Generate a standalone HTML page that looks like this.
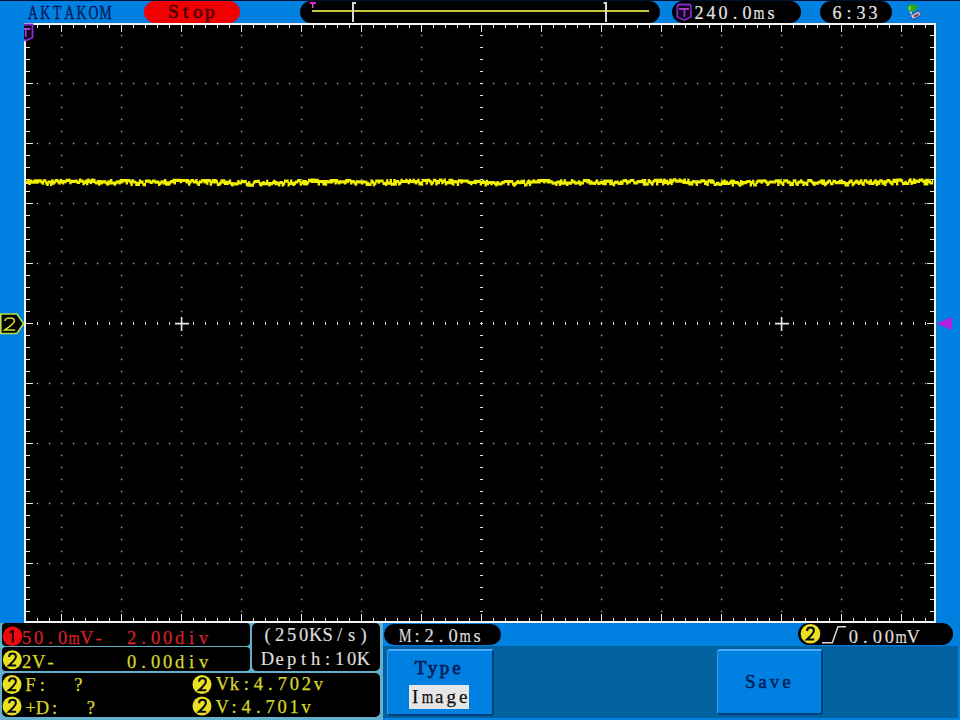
<!DOCTYPE html>
<html><head><meta charset="utf-8">
<style>
html,body{margin:0;padding:0;}
body{width:960px;height:720px;overflow:hidden;background:#0080e0;position:relative;font-family:"Liberation Mono",monospace;}
.a{position:absolute;white-space:pre;}
.pill{position:absolute;background:#000;border-radius:11.5px;}
.mono{font-family:"Liberation Mono",monospace;}
.t{font-size:19.7px;line-height:22px;}
.cn{font-family:"Liberation Sans",sans-serif;font-weight:bold;font-size:16px;line-height:20px;color:#101010;width:17px;text-align:center;}
.btn{position:absolute;background:#0080e0;border-top:2px solid #50a8ff;border-left:1px solid #3898f0;border-right:2px solid #00407a;border-bottom:2px solid #00407a;box-sizing:border-box;border-radius:3px;}
#wrap{position:absolute;left:0;top:0;width:960px;height:720px;overflow:hidden;background:#0080e0;}
</style></head><body><div id="wrap">
<svg class="a" style="left:0;top:0" width="960" height="720" viewBox="0 0 960 720">
<rect x="0" y="0" width="960" height="1" fill="#001030"/>
<rect x="24" y="23" width="912" height="600" fill="#000"/>
<path d="M60.8 34.8h1.5v1.5h-1.5zM60.8 46.8h1.5v1.5h-1.5zM60.8 58.8h1.5v1.5h-1.5zM60.8 70.8h1.5v1.5h-1.5zM60.8 82.8h1.5v1.5h-1.5zM60.8 94.8h1.5v1.5h-1.5zM60.8 106.8h1.5v1.5h-1.5zM60.8 118.8h1.5v1.5h-1.5zM60.8 130.8h1.5v1.5h-1.5zM60.8 142.8h1.5v1.5h-1.5zM60.8 154.8h1.5v1.5h-1.5zM60.8 166.8h1.5v1.5h-1.5zM60.8 178.8h1.5v1.5h-1.5zM60.8 190.8h1.5v1.5h-1.5zM60.8 202.8h1.5v1.5h-1.5zM60.8 214.8h1.5v1.5h-1.5zM60.8 226.8h1.5v1.5h-1.5zM60.8 238.8h1.5v1.5h-1.5zM60.8 250.8h1.5v1.5h-1.5zM60.8 262.8h1.5v1.5h-1.5zM60.8 274.8h1.5v1.5h-1.5zM60.8 286.8h1.5v1.5h-1.5zM60.8 298.8h1.5v1.5h-1.5zM60.8 310.8h1.5v1.5h-1.5zM60.8 322.8h1.5v1.5h-1.5zM60.8 334.8h1.5v1.5h-1.5zM60.8 346.8h1.5v1.5h-1.5zM60.8 358.8h1.5v1.5h-1.5zM60.8 370.8h1.5v1.5h-1.5zM60.8 382.8h1.5v1.5h-1.5zM60.8 394.8h1.5v1.5h-1.5zM60.8 406.8h1.5v1.5h-1.5zM60.8 418.8h1.5v1.5h-1.5zM60.8 430.8h1.5v1.5h-1.5zM60.8 442.8h1.5v1.5h-1.5zM60.8 454.8h1.5v1.5h-1.5zM60.8 466.8h1.5v1.5h-1.5zM60.8 478.8h1.5v1.5h-1.5zM60.8 490.8h1.5v1.5h-1.5zM60.8 502.8h1.5v1.5h-1.5zM60.8 514.8h1.5v1.5h-1.5zM60.8 526.8h1.5v1.5h-1.5zM60.8 538.8h1.5v1.5h-1.5zM60.8 550.8h1.5v1.5h-1.5zM60.8 562.8h1.5v1.5h-1.5zM60.8 574.8h1.5v1.5h-1.5zM60.8 586.8h1.5v1.5h-1.5zM60.8 598.8h1.5v1.5h-1.5zM60.8 610.8h1.5v1.5h-1.5zM120.8 34.8h1.5v1.5h-1.5zM120.8 46.8h1.5v1.5h-1.5zM120.8 58.8h1.5v1.5h-1.5zM120.8 70.8h1.5v1.5h-1.5zM120.8 82.8h1.5v1.5h-1.5zM120.8 94.8h1.5v1.5h-1.5zM120.8 106.8h1.5v1.5h-1.5zM120.8 118.8h1.5v1.5h-1.5zM120.8 130.8h1.5v1.5h-1.5zM120.8 142.8h1.5v1.5h-1.5zM120.8 154.8h1.5v1.5h-1.5zM120.8 166.8h1.5v1.5h-1.5zM120.8 178.8h1.5v1.5h-1.5zM120.8 190.8h1.5v1.5h-1.5zM120.8 202.8h1.5v1.5h-1.5zM120.8 214.8h1.5v1.5h-1.5zM120.8 226.8h1.5v1.5h-1.5zM120.8 238.8h1.5v1.5h-1.5zM120.8 250.8h1.5v1.5h-1.5zM120.8 262.8h1.5v1.5h-1.5zM120.8 274.8h1.5v1.5h-1.5zM120.8 286.8h1.5v1.5h-1.5zM120.8 298.8h1.5v1.5h-1.5zM120.8 310.8h1.5v1.5h-1.5zM120.8 322.8h1.5v1.5h-1.5zM120.8 334.8h1.5v1.5h-1.5zM120.8 346.8h1.5v1.5h-1.5zM120.8 358.8h1.5v1.5h-1.5zM120.8 370.8h1.5v1.5h-1.5zM120.8 382.8h1.5v1.5h-1.5zM120.8 394.8h1.5v1.5h-1.5zM120.8 406.8h1.5v1.5h-1.5zM120.8 418.8h1.5v1.5h-1.5zM120.8 430.8h1.5v1.5h-1.5zM120.8 442.8h1.5v1.5h-1.5zM120.8 454.8h1.5v1.5h-1.5zM120.8 466.8h1.5v1.5h-1.5zM120.8 478.8h1.5v1.5h-1.5zM120.8 490.8h1.5v1.5h-1.5zM120.8 502.8h1.5v1.5h-1.5zM120.8 514.8h1.5v1.5h-1.5zM120.8 526.8h1.5v1.5h-1.5zM120.8 538.8h1.5v1.5h-1.5zM120.8 550.8h1.5v1.5h-1.5zM120.8 562.8h1.5v1.5h-1.5zM120.8 574.8h1.5v1.5h-1.5zM120.8 586.8h1.5v1.5h-1.5zM120.8 598.8h1.5v1.5h-1.5zM120.8 610.8h1.5v1.5h-1.5zM180.8 34.8h1.5v1.5h-1.5zM180.8 46.8h1.5v1.5h-1.5zM180.8 58.8h1.5v1.5h-1.5zM180.8 70.8h1.5v1.5h-1.5zM180.8 82.8h1.5v1.5h-1.5zM180.8 94.8h1.5v1.5h-1.5zM180.8 106.8h1.5v1.5h-1.5zM180.8 118.8h1.5v1.5h-1.5zM180.8 130.8h1.5v1.5h-1.5zM180.8 142.8h1.5v1.5h-1.5zM180.8 154.8h1.5v1.5h-1.5zM180.8 166.8h1.5v1.5h-1.5zM180.8 178.8h1.5v1.5h-1.5zM180.8 190.8h1.5v1.5h-1.5zM180.8 202.8h1.5v1.5h-1.5zM180.8 214.8h1.5v1.5h-1.5zM180.8 226.8h1.5v1.5h-1.5zM180.8 238.8h1.5v1.5h-1.5zM180.8 250.8h1.5v1.5h-1.5zM180.8 262.8h1.5v1.5h-1.5zM180.8 274.8h1.5v1.5h-1.5zM180.8 286.8h1.5v1.5h-1.5zM180.8 298.8h1.5v1.5h-1.5zM180.8 310.8h1.5v1.5h-1.5zM180.8 322.8h1.5v1.5h-1.5zM180.8 334.8h1.5v1.5h-1.5zM180.8 346.8h1.5v1.5h-1.5zM180.8 358.8h1.5v1.5h-1.5zM180.8 370.8h1.5v1.5h-1.5zM180.8 382.8h1.5v1.5h-1.5zM180.8 394.8h1.5v1.5h-1.5zM180.8 406.8h1.5v1.5h-1.5zM180.8 418.8h1.5v1.5h-1.5zM180.8 430.8h1.5v1.5h-1.5zM180.8 442.8h1.5v1.5h-1.5zM180.8 454.8h1.5v1.5h-1.5zM180.8 466.8h1.5v1.5h-1.5zM180.8 478.8h1.5v1.5h-1.5zM180.8 490.8h1.5v1.5h-1.5zM180.8 502.8h1.5v1.5h-1.5zM180.8 514.8h1.5v1.5h-1.5zM180.8 526.8h1.5v1.5h-1.5zM180.8 538.8h1.5v1.5h-1.5zM180.8 550.8h1.5v1.5h-1.5zM180.8 562.8h1.5v1.5h-1.5zM180.8 574.8h1.5v1.5h-1.5zM180.8 586.8h1.5v1.5h-1.5zM180.8 598.8h1.5v1.5h-1.5zM180.8 610.8h1.5v1.5h-1.5zM240.8 34.8h1.5v1.5h-1.5zM240.8 46.8h1.5v1.5h-1.5zM240.8 58.8h1.5v1.5h-1.5zM240.8 70.8h1.5v1.5h-1.5zM240.8 82.8h1.5v1.5h-1.5zM240.8 94.8h1.5v1.5h-1.5zM240.8 106.8h1.5v1.5h-1.5zM240.8 118.8h1.5v1.5h-1.5zM240.8 130.8h1.5v1.5h-1.5zM240.8 142.8h1.5v1.5h-1.5zM240.8 154.8h1.5v1.5h-1.5zM240.8 166.8h1.5v1.5h-1.5zM240.8 178.8h1.5v1.5h-1.5zM240.8 190.8h1.5v1.5h-1.5zM240.8 202.8h1.5v1.5h-1.5zM240.8 214.8h1.5v1.5h-1.5zM240.8 226.8h1.5v1.5h-1.5zM240.8 238.8h1.5v1.5h-1.5zM240.8 250.8h1.5v1.5h-1.5zM240.8 262.8h1.5v1.5h-1.5zM240.8 274.8h1.5v1.5h-1.5zM240.8 286.8h1.5v1.5h-1.5zM240.8 298.8h1.5v1.5h-1.5zM240.8 310.8h1.5v1.5h-1.5zM240.8 322.8h1.5v1.5h-1.5zM240.8 334.8h1.5v1.5h-1.5zM240.8 346.8h1.5v1.5h-1.5zM240.8 358.8h1.5v1.5h-1.5zM240.8 370.8h1.5v1.5h-1.5zM240.8 382.8h1.5v1.5h-1.5zM240.8 394.8h1.5v1.5h-1.5zM240.8 406.8h1.5v1.5h-1.5zM240.8 418.8h1.5v1.5h-1.5zM240.8 430.8h1.5v1.5h-1.5zM240.8 442.8h1.5v1.5h-1.5zM240.8 454.8h1.5v1.5h-1.5zM240.8 466.8h1.5v1.5h-1.5zM240.8 478.8h1.5v1.5h-1.5zM240.8 490.8h1.5v1.5h-1.5zM240.8 502.8h1.5v1.5h-1.5zM240.8 514.8h1.5v1.5h-1.5zM240.8 526.8h1.5v1.5h-1.5zM240.8 538.8h1.5v1.5h-1.5zM240.8 550.8h1.5v1.5h-1.5zM240.8 562.8h1.5v1.5h-1.5zM240.8 574.8h1.5v1.5h-1.5zM240.8 586.8h1.5v1.5h-1.5zM240.8 598.8h1.5v1.5h-1.5zM240.8 610.8h1.5v1.5h-1.5zM300.8 34.8h1.5v1.5h-1.5zM300.8 46.8h1.5v1.5h-1.5zM300.8 58.8h1.5v1.5h-1.5zM300.8 70.8h1.5v1.5h-1.5zM300.8 82.8h1.5v1.5h-1.5zM300.8 94.8h1.5v1.5h-1.5zM300.8 106.8h1.5v1.5h-1.5zM300.8 118.8h1.5v1.5h-1.5zM300.8 130.8h1.5v1.5h-1.5zM300.8 142.8h1.5v1.5h-1.5zM300.8 154.8h1.5v1.5h-1.5zM300.8 166.8h1.5v1.5h-1.5zM300.8 178.8h1.5v1.5h-1.5zM300.8 190.8h1.5v1.5h-1.5zM300.8 202.8h1.5v1.5h-1.5zM300.8 214.8h1.5v1.5h-1.5zM300.8 226.8h1.5v1.5h-1.5zM300.8 238.8h1.5v1.5h-1.5zM300.8 250.8h1.5v1.5h-1.5zM300.8 262.8h1.5v1.5h-1.5zM300.8 274.8h1.5v1.5h-1.5zM300.8 286.8h1.5v1.5h-1.5zM300.8 298.8h1.5v1.5h-1.5zM300.8 310.8h1.5v1.5h-1.5zM300.8 322.8h1.5v1.5h-1.5zM300.8 334.8h1.5v1.5h-1.5zM300.8 346.8h1.5v1.5h-1.5zM300.8 358.8h1.5v1.5h-1.5zM300.8 370.8h1.5v1.5h-1.5zM300.8 382.8h1.5v1.5h-1.5zM300.8 394.8h1.5v1.5h-1.5zM300.8 406.8h1.5v1.5h-1.5zM300.8 418.8h1.5v1.5h-1.5zM300.8 430.8h1.5v1.5h-1.5zM300.8 442.8h1.5v1.5h-1.5zM300.8 454.8h1.5v1.5h-1.5zM300.8 466.8h1.5v1.5h-1.5zM300.8 478.8h1.5v1.5h-1.5zM300.8 490.8h1.5v1.5h-1.5zM300.8 502.8h1.5v1.5h-1.5zM300.8 514.8h1.5v1.5h-1.5zM300.8 526.8h1.5v1.5h-1.5zM300.8 538.8h1.5v1.5h-1.5zM300.8 550.8h1.5v1.5h-1.5zM300.8 562.8h1.5v1.5h-1.5zM300.8 574.8h1.5v1.5h-1.5zM300.8 586.8h1.5v1.5h-1.5zM300.8 598.8h1.5v1.5h-1.5zM300.8 610.8h1.5v1.5h-1.5zM360.8 34.8h1.5v1.5h-1.5zM360.8 46.8h1.5v1.5h-1.5zM360.8 58.8h1.5v1.5h-1.5zM360.8 70.8h1.5v1.5h-1.5zM360.8 82.8h1.5v1.5h-1.5zM360.8 94.8h1.5v1.5h-1.5zM360.8 106.8h1.5v1.5h-1.5zM360.8 118.8h1.5v1.5h-1.5zM360.8 130.8h1.5v1.5h-1.5zM360.8 142.8h1.5v1.5h-1.5zM360.8 154.8h1.5v1.5h-1.5zM360.8 166.8h1.5v1.5h-1.5zM360.8 178.8h1.5v1.5h-1.5zM360.8 190.8h1.5v1.5h-1.5zM360.8 202.8h1.5v1.5h-1.5zM360.8 214.8h1.5v1.5h-1.5zM360.8 226.8h1.5v1.5h-1.5zM360.8 238.8h1.5v1.5h-1.5zM360.8 250.8h1.5v1.5h-1.5zM360.8 262.8h1.5v1.5h-1.5zM360.8 274.8h1.5v1.5h-1.5zM360.8 286.8h1.5v1.5h-1.5zM360.8 298.8h1.5v1.5h-1.5zM360.8 310.8h1.5v1.5h-1.5zM360.8 322.8h1.5v1.5h-1.5zM360.8 334.8h1.5v1.5h-1.5zM360.8 346.8h1.5v1.5h-1.5zM360.8 358.8h1.5v1.5h-1.5zM360.8 370.8h1.5v1.5h-1.5zM360.8 382.8h1.5v1.5h-1.5zM360.8 394.8h1.5v1.5h-1.5zM360.8 406.8h1.5v1.5h-1.5zM360.8 418.8h1.5v1.5h-1.5zM360.8 430.8h1.5v1.5h-1.5zM360.8 442.8h1.5v1.5h-1.5zM360.8 454.8h1.5v1.5h-1.5zM360.8 466.8h1.5v1.5h-1.5zM360.8 478.8h1.5v1.5h-1.5zM360.8 490.8h1.5v1.5h-1.5zM360.8 502.8h1.5v1.5h-1.5zM360.8 514.8h1.5v1.5h-1.5zM360.8 526.8h1.5v1.5h-1.5zM360.8 538.8h1.5v1.5h-1.5zM360.8 550.8h1.5v1.5h-1.5zM360.8 562.8h1.5v1.5h-1.5zM360.8 574.8h1.5v1.5h-1.5zM360.8 586.8h1.5v1.5h-1.5zM360.8 598.8h1.5v1.5h-1.5zM360.8 610.8h1.5v1.5h-1.5zM420.8 34.8h1.5v1.5h-1.5zM420.8 46.8h1.5v1.5h-1.5zM420.8 58.8h1.5v1.5h-1.5zM420.8 70.8h1.5v1.5h-1.5zM420.8 82.8h1.5v1.5h-1.5zM420.8 94.8h1.5v1.5h-1.5zM420.8 106.8h1.5v1.5h-1.5zM420.8 118.8h1.5v1.5h-1.5zM420.8 130.8h1.5v1.5h-1.5zM420.8 142.8h1.5v1.5h-1.5zM420.8 154.8h1.5v1.5h-1.5zM420.8 166.8h1.5v1.5h-1.5zM420.8 178.8h1.5v1.5h-1.5zM420.8 190.8h1.5v1.5h-1.5zM420.8 202.8h1.5v1.5h-1.5zM420.8 214.8h1.5v1.5h-1.5zM420.8 226.8h1.5v1.5h-1.5zM420.8 238.8h1.5v1.5h-1.5zM420.8 250.8h1.5v1.5h-1.5zM420.8 262.8h1.5v1.5h-1.5zM420.8 274.8h1.5v1.5h-1.5zM420.8 286.8h1.5v1.5h-1.5zM420.8 298.8h1.5v1.5h-1.5zM420.8 310.8h1.5v1.5h-1.5zM420.8 322.8h1.5v1.5h-1.5zM420.8 334.8h1.5v1.5h-1.5zM420.8 346.8h1.5v1.5h-1.5zM420.8 358.8h1.5v1.5h-1.5zM420.8 370.8h1.5v1.5h-1.5zM420.8 382.8h1.5v1.5h-1.5zM420.8 394.8h1.5v1.5h-1.5zM420.8 406.8h1.5v1.5h-1.5zM420.8 418.8h1.5v1.5h-1.5zM420.8 430.8h1.5v1.5h-1.5zM420.8 442.8h1.5v1.5h-1.5zM420.8 454.8h1.5v1.5h-1.5zM420.8 466.8h1.5v1.5h-1.5zM420.8 478.8h1.5v1.5h-1.5zM420.8 490.8h1.5v1.5h-1.5zM420.8 502.8h1.5v1.5h-1.5zM420.8 514.8h1.5v1.5h-1.5zM420.8 526.8h1.5v1.5h-1.5zM420.8 538.8h1.5v1.5h-1.5zM420.8 550.8h1.5v1.5h-1.5zM420.8 562.8h1.5v1.5h-1.5zM420.8 574.8h1.5v1.5h-1.5zM420.8 586.8h1.5v1.5h-1.5zM420.8 598.8h1.5v1.5h-1.5zM420.8 610.8h1.5v1.5h-1.5zM540.8 34.8h1.5v1.5h-1.5zM540.8 46.8h1.5v1.5h-1.5zM540.8 58.8h1.5v1.5h-1.5zM540.8 70.8h1.5v1.5h-1.5zM540.8 82.8h1.5v1.5h-1.5zM540.8 94.8h1.5v1.5h-1.5zM540.8 106.8h1.5v1.5h-1.5zM540.8 118.8h1.5v1.5h-1.5zM540.8 130.8h1.5v1.5h-1.5zM540.8 142.8h1.5v1.5h-1.5zM540.8 154.8h1.5v1.5h-1.5zM540.8 166.8h1.5v1.5h-1.5zM540.8 178.8h1.5v1.5h-1.5zM540.8 190.8h1.5v1.5h-1.5zM540.8 202.8h1.5v1.5h-1.5zM540.8 214.8h1.5v1.5h-1.5zM540.8 226.8h1.5v1.5h-1.5zM540.8 238.8h1.5v1.5h-1.5zM540.8 250.8h1.5v1.5h-1.5zM540.8 262.8h1.5v1.5h-1.5zM540.8 274.8h1.5v1.5h-1.5zM540.8 286.8h1.5v1.5h-1.5zM540.8 298.8h1.5v1.5h-1.5zM540.8 310.8h1.5v1.5h-1.5zM540.8 322.8h1.5v1.5h-1.5zM540.8 334.8h1.5v1.5h-1.5zM540.8 346.8h1.5v1.5h-1.5zM540.8 358.8h1.5v1.5h-1.5zM540.8 370.8h1.5v1.5h-1.5zM540.8 382.8h1.5v1.5h-1.5zM540.8 394.8h1.5v1.5h-1.5zM540.8 406.8h1.5v1.5h-1.5zM540.8 418.8h1.5v1.5h-1.5zM540.8 430.8h1.5v1.5h-1.5zM540.8 442.8h1.5v1.5h-1.5zM540.8 454.8h1.5v1.5h-1.5zM540.8 466.8h1.5v1.5h-1.5zM540.8 478.8h1.5v1.5h-1.5zM540.8 490.8h1.5v1.5h-1.5zM540.8 502.8h1.5v1.5h-1.5zM540.8 514.8h1.5v1.5h-1.5zM540.8 526.8h1.5v1.5h-1.5zM540.8 538.8h1.5v1.5h-1.5zM540.8 550.8h1.5v1.5h-1.5zM540.8 562.8h1.5v1.5h-1.5zM540.8 574.8h1.5v1.5h-1.5zM540.8 586.8h1.5v1.5h-1.5zM540.8 598.8h1.5v1.5h-1.5zM540.8 610.8h1.5v1.5h-1.5zM600.8 34.8h1.5v1.5h-1.5zM600.8 46.8h1.5v1.5h-1.5zM600.8 58.8h1.5v1.5h-1.5zM600.8 70.8h1.5v1.5h-1.5zM600.8 82.8h1.5v1.5h-1.5zM600.8 94.8h1.5v1.5h-1.5zM600.8 106.8h1.5v1.5h-1.5zM600.8 118.8h1.5v1.5h-1.5zM600.8 130.8h1.5v1.5h-1.5zM600.8 142.8h1.5v1.5h-1.5zM600.8 154.8h1.5v1.5h-1.5zM600.8 166.8h1.5v1.5h-1.5zM600.8 178.8h1.5v1.5h-1.5zM600.8 190.8h1.5v1.5h-1.5zM600.8 202.8h1.5v1.5h-1.5zM600.8 214.8h1.5v1.5h-1.5zM600.8 226.8h1.5v1.5h-1.5zM600.8 238.8h1.5v1.5h-1.5zM600.8 250.8h1.5v1.5h-1.5zM600.8 262.8h1.5v1.5h-1.5zM600.8 274.8h1.5v1.5h-1.5zM600.8 286.8h1.5v1.5h-1.5zM600.8 298.8h1.5v1.5h-1.5zM600.8 310.8h1.5v1.5h-1.5zM600.8 322.8h1.5v1.5h-1.5zM600.8 334.8h1.5v1.5h-1.5zM600.8 346.8h1.5v1.5h-1.5zM600.8 358.8h1.5v1.5h-1.5zM600.8 370.8h1.5v1.5h-1.5zM600.8 382.8h1.5v1.5h-1.5zM600.8 394.8h1.5v1.5h-1.5zM600.8 406.8h1.5v1.5h-1.5zM600.8 418.8h1.5v1.5h-1.5zM600.8 430.8h1.5v1.5h-1.5zM600.8 442.8h1.5v1.5h-1.5zM600.8 454.8h1.5v1.5h-1.5zM600.8 466.8h1.5v1.5h-1.5zM600.8 478.8h1.5v1.5h-1.5zM600.8 490.8h1.5v1.5h-1.5zM600.8 502.8h1.5v1.5h-1.5zM600.8 514.8h1.5v1.5h-1.5zM600.8 526.8h1.5v1.5h-1.5zM600.8 538.8h1.5v1.5h-1.5zM600.8 550.8h1.5v1.5h-1.5zM600.8 562.8h1.5v1.5h-1.5zM600.8 574.8h1.5v1.5h-1.5zM600.8 586.8h1.5v1.5h-1.5zM600.8 598.8h1.5v1.5h-1.5zM600.8 610.8h1.5v1.5h-1.5zM660.8 34.8h1.5v1.5h-1.5zM660.8 46.8h1.5v1.5h-1.5zM660.8 58.8h1.5v1.5h-1.5zM660.8 70.8h1.5v1.5h-1.5zM660.8 82.8h1.5v1.5h-1.5zM660.8 94.8h1.5v1.5h-1.5zM660.8 106.8h1.5v1.5h-1.5zM660.8 118.8h1.5v1.5h-1.5zM660.8 130.8h1.5v1.5h-1.5zM660.8 142.8h1.5v1.5h-1.5zM660.8 154.8h1.5v1.5h-1.5zM660.8 166.8h1.5v1.5h-1.5zM660.8 178.8h1.5v1.5h-1.5zM660.8 190.8h1.5v1.5h-1.5zM660.8 202.8h1.5v1.5h-1.5zM660.8 214.8h1.5v1.5h-1.5zM660.8 226.8h1.5v1.5h-1.5zM660.8 238.8h1.5v1.5h-1.5zM660.8 250.8h1.5v1.5h-1.5zM660.8 262.8h1.5v1.5h-1.5zM660.8 274.8h1.5v1.5h-1.5zM660.8 286.8h1.5v1.5h-1.5zM660.8 298.8h1.5v1.5h-1.5zM660.8 310.8h1.5v1.5h-1.5zM660.8 322.8h1.5v1.5h-1.5zM660.8 334.8h1.5v1.5h-1.5zM660.8 346.8h1.5v1.5h-1.5zM660.8 358.8h1.5v1.5h-1.5zM660.8 370.8h1.5v1.5h-1.5zM660.8 382.8h1.5v1.5h-1.5zM660.8 394.8h1.5v1.5h-1.5zM660.8 406.8h1.5v1.5h-1.5zM660.8 418.8h1.5v1.5h-1.5zM660.8 430.8h1.5v1.5h-1.5zM660.8 442.8h1.5v1.5h-1.5zM660.8 454.8h1.5v1.5h-1.5zM660.8 466.8h1.5v1.5h-1.5zM660.8 478.8h1.5v1.5h-1.5zM660.8 490.8h1.5v1.5h-1.5zM660.8 502.8h1.5v1.5h-1.5zM660.8 514.8h1.5v1.5h-1.5zM660.8 526.8h1.5v1.5h-1.5zM660.8 538.8h1.5v1.5h-1.5zM660.8 550.8h1.5v1.5h-1.5zM660.8 562.8h1.5v1.5h-1.5zM660.8 574.8h1.5v1.5h-1.5zM660.8 586.8h1.5v1.5h-1.5zM660.8 598.8h1.5v1.5h-1.5zM660.8 610.8h1.5v1.5h-1.5zM720.8 34.8h1.5v1.5h-1.5zM720.8 46.8h1.5v1.5h-1.5zM720.8 58.8h1.5v1.5h-1.5zM720.8 70.8h1.5v1.5h-1.5zM720.8 82.8h1.5v1.5h-1.5zM720.8 94.8h1.5v1.5h-1.5zM720.8 106.8h1.5v1.5h-1.5zM720.8 118.8h1.5v1.5h-1.5zM720.8 130.8h1.5v1.5h-1.5zM720.8 142.8h1.5v1.5h-1.5zM720.8 154.8h1.5v1.5h-1.5zM720.8 166.8h1.5v1.5h-1.5zM720.8 178.8h1.5v1.5h-1.5zM720.8 190.8h1.5v1.5h-1.5zM720.8 202.8h1.5v1.5h-1.5zM720.8 214.8h1.5v1.5h-1.5zM720.8 226.8h1.5v1.5h-1.5zM720.8 238.8h1.5v1.5h-1.5zM720.8 250.8h1.5v1.5h-1.5zM720.8 262.8h1.5v1.5h-1.5zM720.8 274.8h1.5v1.5h-1.5zM720.8 286.8h1.5v1.5h-1.5zM720.8 298.8h1.5v1.5h-1.5zM720.8 310.8h1.5v1.5h-1.5zM720.8 322.8h1.5v1.5h-1.5zM720.8 334.8h1.5v1.5h-1.5zM720.8 346.8h1.5v1.5h-1.5zM720.8 358.8h1.5v1.5h-1.5zM720.8 370.8h1.5v1.5h-1.5zM720.8 382.8h1.5v1.5h-1.5zM720.8 394.8h1.5v1.5h-1.5zM720.8 406.8h1.5v1.5h-1.5zM720.8 418.8h1.5v1.5h-1.5zM720.8 430.8h1.5v1.5h-1.5zM720.8 442.8h1.5v1.5h-1.5zM720.8 454.8h1.5v1.5h-1.5zM720.8 466.8h1.5v1.5h-1.5zM720.8 478.8h1.5v1.5h-1.5zM720.8 490.8h1.5v1.5h-1.5zM720.8 502.8h1.5v1.5h-1.5zM720.8 514.8h1.5v1.5h-1.5zM720.8 526.8h1.5v1.5h-1.5zM720.8 538.8h1.5v1.5h-1.5zM720.8 550.8h1.5v1.5h-1.5zM720.8 562.8h1.5v1.5h-1.5zM720.8 574.8h1.5v1.5h-1.5zM720.8 586.8h1.5v1.5h-1.5zM720.8 598.8h1.5v1.5h-1.5zM720.8 610.8h1.5v1.5h-1.5zM780.8 34.8h1.5v1.5h-1.5zM780.8 46.8h1.5v1.5h-1.5zM780.8 58.8h1.5v1.5h-1.5zM780.8 70.8h1.5v1.5h-1.5zM780.8 82.8h1.5v1.5h-1.5zM780.8 94.8h1.5v1.5h-1.5zM780.8 106.8h1.5v1.5h-1.5zM780.8 118.8h1.5v1.5h-1.5zM780.8 130.8h1.5v1.5h-1.5zM780.8 142.8h1.5v1.5h-1.5zM780.8 154.8h1.5v1.5h-1.5zM780.8 166.8h1.5v1.5h-1.5zM780.8 178.8h1.5v1.5h-1.5zM780.8 190.8h1.5v1.5h-1.5zM780.8 202.8h1.5v1.5h-1.5zM780.8 214.8h1.5v1.5h-1.5zM780.8 226.8h1.5v1.5h-1.5zM780.8 238.8h1.5v1.5h-1.5zM780.8 250.8h1.5v1.5h-1.5zM780.8 262.8h1.5v1.5h-1.5zM780.8 274.8h1.5v1.5h-1.5zM780.8 286.8h1.5v1.5h-1.5zM780.8 298.8h1.5v1.5h-1.5zM780.8 310.8h1.5v1.5h-1.5zM780.8 322.8h1.5v1.5h-1.5zM780.8 334.8h1.5v1.5h-1.5zM780.8 346.8h1.5v1.5h-1.5zM780.8 358.8h1.5v1.5h-1.5zM780.8 370.8h1.5v1.5h-1.5zM780.8 382.8h1.5v1.5h-1.5zM780.8 394.8h1.5v1.5h-1.5zM780.8 406.8h1.5v1.5h-1.5zM780.8 418.8h1.5v1.5h-1.5zM780.8 430.8h1.5v1.5h-1.5zM780.8 442.8h1.5v1.5h-1.5zM780.8 454.8h1.5v1.5h-1.5zM780.8 466.8h1.5v1.5h-1.5zM780.8 478.8h1.5v1.5h-1.5zM780.8 490.8h1.5v1.5h-1.5zM780.8 502.8h1.5v1.5h-1.5zM780.8 514.8h1.5v1.5h-1.5zM780.8 526.8h1.5v1.5h-1.5zM780.8 538.8h1.5v1.5h-1.5zM780.8 550.8h1.5v1.5h-1.5zM780.8 562.8h1.5v1.5h-1.5zM780.8 574.8h1.5v1.5h-1.5zM780.8 586.8h1.5v1.5h-1.5zM780.8 598.8h1.5v1.5h-1.5zM780.8 610.8h1.5v1.5h-1.5zM840.8 34.8h1.5v1.5h-1.5zM840.8 46.8h1.5v1.5h-1.5zM840.8 58.8h1.5v1.5h-1.5zM840.8 70.8h1.5v1.5h-1.5zM840.8 82.8h1.5v1.5h-1.5zM840.8 94.8h1.5v1.5h-1.5zM840.8 106.8h1.5v1.5h-1.5zM840.8 118.8h1.5v1.5h-1.5zM840.8 130.8h1.5v1.5h-1.5zM840.8 142.8h1.5v1.5h-1.5zM840.8 154.8h1.5v1.5h-1.5zM840.8 166.8h1.5v1.5h-1.5zM840.8 178.8h1.5v1.5h-1.5zM840.8 190.8h1.5v1.5h-1.5zM840.8 202.8h1.5v1.5h-1.5zM840.8 214.8h1.5v1.5h-1.5zM840.8 226.8h1.5v1.5h-1.5zM840.8 238.8h1.5v1.5h-1.5zM840.8 250.8h1.5v1.5h-1.5zM840.8 262.8h1.5v1.5h-1.5zM840.8 274.8h1.5v1.5h-1.5zM840.8 286.8h1.5v1.5h-1.5zM840.8 298.8h1.5v1.5h-1.5zM840.8 310.8h1.5v1.5h-1.5zM840.8 322.8h1.5v1.5h-1.5zM840.8 334.8h1.5v1.5h-1.5zM840.8 346.8h1.5v1.5h-1.5zM840.8 358.8h1.5v1.5h-1.5zM840.8 370.8h1.5v1.5h-1.5zM840.8 382.8h1.5v1.5h-1.5zM840.8 394.8h1.5v1.5h-1.5zM840.8 406.8h1.5v1.5h-1.5zM840.8 418.8h1.5v1.5h-1.5zM840.8 430.8h1.5v1.5h-1.5zM840.8 442.8h1.5v1.5h-1.5zM840.8 454.8h1.5v1.5h-1.5zM840.8 466.8h1.5v1.5h-1.5zM840.8 478.8h1.5v1.5h-1.5zM840.8 490.8h1.5v1.5h-1.5zM840.8 502.8h1.5v1.5h-1.5zM840.8 514.8h1.5v1.5h-1.5zM840.8 526.8h1.5v1.5h-1.5zM840.8 538.8h1.5v1.5h-1.5zM840.8 550.8h1.5v1.5h-1.5zM840.8 562.8h1.5v1.5h-1.5zM840.8 574.8h1.5v1.5h-1.5zM840.8 586.8h1.5v1.5h-1.5zM840.8 598.8h1.5v1.5h-1.5zM840.8 610.8h1.5v1.5h-1.5zM900.8 34.8h1.5v1.5h-1.5zM900.8 46.8h1.5v1.5h-1.5zM900.8 58.8h1.5v1.5h-1.5zM900.8 70.8h1.5v1.5h-1.5zM900.8 82.8h1.5v1.5h-1.5zM900.8 94.8h1.5v1.5h-1.5zM900.8 106.8h1.5v1.5h-1.5zM900.8 118.8h1.5v1.5h-1.5zM900.8 130.8h1.5v1.5h-1.5zM900.8 142.8h1.5v1.5h-1.5zM900.8 154.8h1.5v1.5h-1.5zM900.8 166.8h1.5v1.5h-1.5zM900.8 178.8h1.5v1.5h-1.5zM900.8 190.8h1.5v1.5h-1.5zM900.8 202.8h1.5v1.5h-1.5zM900.8 214.8h1.5v1.5h-1.5zM900.8 226.8h1.5v1.5h-1.5zM900.8 238.8h1.5v1.5h-1.5zM900.8 250.8h1.5v1.5h-1.5zM900.8 262.8h1.5v1.5h-1.5zM900.8 274.8h1.5v1.5h-1.5zM900.8 286.8h1.5v1.5h-1.5zM900.8 298.8h1.5v1.5h-1.5zM900.8 310.8h1.5v1.5h-1.5zM900.8 322.8h1.5v1.5h-1.5zM900.8 334.8h1.5v1.5h-1.5zM900.8 346.8h1.5v1.5h-1.5zM900.8 358.8h1.5v1.5h-1.5zM900.8 370.8h1.5v1.5h-1.5zM900.8 382.8h1.5v1.5h-1.5zM900.8 394.8h1.5v1.5h-1.5zM900.8 406.8h1.5v1.5h-1.5zM900.8 418.8h1.5v1.5h-1.5zM900.8 430.8h1.5v1.5h-1.5zM900.8 442.8h1.5v1.5h-1.5zM900.8 454.8h1.5v1.5h-1.5zM900.8 466.8h1.5v1.5h-1.5zM900.8 478.8h1.5v1.5h-1.5zM900.8 490.8h1.5v1.5h-1.5zM900.8 502.8h1.5v1.5h-1.5zM900.8 514.8h1.5v1.5h-1.5zM900.8 526.8h1.5v1.5h-1.5zM900.8 538.8h1.5v1.5h-1.5zM900.8 550.8h1.5v1.5h-1.5zM900.8 562.8h1.5v1.5h-1.5zM900.8 574.8h1.5v1.5h-1.5zM900.8 586.8h1.5v1.5h-1.5zM900.8 598.8h1.5v1.5h-1.5zM900.8 610.8h1.5v1.5h-1.5zM36.8 82.8h1.5v1.5h-1.5zM48.8 82.8h1.5v1.5h-1.5zM60.8 82.8h1.5v1.5h-1.5zM72.8 82.8h1.5v1.5h-1.5zM84.8 82.8h1.5v1.5h-1.5zM96.8 82.8h1.5v1.5h-1.5zM108.8 82.8h1.5v1.5h-1.5zM120.8 82.8h1.5v1.5h-1.5zM132.8 82.8h1.5v1.5h-1.5zM144.8 82.8h1.5v1.5h-1.5zM156.8 82.8h1.5v1.5h-1.5zM168.8 82.8h1.5v1.5h-1.5zM180.8 82.8h1.5v1.5h-1.5zM192.8 82.8h1.5v1.5h-1.5zM204.8 82.8h1.5v1.5h-1.5zM216.8 82.8h1.5v1.5h-1.5zM228.8 82.8h1.5v1.5h-1.5zM240.8 82.8h1.5v1.5h-1.5zM252.8 82.8h1.5v1.5h-1.5zM264.8 82.8h1.5v1.5h-1.5zM276.8 82.8h1.5v1.5h-1.5zM288.8 82.8h1.5v1.5h-1.5zM300.8 82.8h1.5v1.5h-1.5zM312.8 82.8h1.5v1.5h-1.5zM324.8 82.8h1.5v1.5h-1.5zM336.8 82.8h1.5v1.5h-1.5zM348.8 82.8h1.5v1.5h-1.5zM360.8 82.8h1.5v1.5h-1.5zM372.8 82.8h1.5v1.5h-1.5zM384.8 82.8h1.5v1.5h-1.5zM396.8 82.8h1.5v1.5h-1.5zM408.8 82.8h1.5v1.5h-1.5zM420.8 82.8h1.5v1.5h-1.5zM432.8 82.8h1.5v1.5h-1.5zM444.8 82.8h1.5v1.5h-1.5zM456.8 82.8h1.5v1.5h-1.5zM468.8 82.8h1.5v1.5h-1.5zM480.8 82.8h1.5v1.5h-1.5zM492.8 82.8h1.5v1.5h-1.5zM504.8 82.8h1.5v1.5h-1.5zM516.8 82.8h1.5v1.5h-1.5zM528.8 82.8h1.5v1.5h-1.5zM540.8 82.8h1.5v1.5h-1.5zM552.8 82.8h1.5v1.5h-1.5zM564.8 82.8h1.5v1.5h-1.5zM576.8 82.8h1.5v1.5h-1.5zM588.8 82.8h1.5v1.5h-1.5zM600.8 82.8h1.5v1.5h-1.5zM612.8 82.8h1.5v1.5h-1.5zM624.8 82.8h1.5v1.5h-1.5zM636.8 82.8h1.5v1.5h-1.5zM648.8 82.8h1.5v1.5h-1.5zM660.8 82.8h1.5v1.5h-1.5zM672.8 82.8h1.5v1.5h-1.5zM684.8 82.8h1.5v1.5h-1.5zM696.8 82.8h1.5v1.5h-1.5zM708.8 82.8h1.5v1.5h-1.5zM720.8 82.8h1.5v1.5h-1.5zM732.8 82.8h1.5v1.5h-1.5zM744.8 82.8h1.5v1.5h-1.5zM756.8 82.8h1.5v1.5h-1.5zM768.8 82.8h1.5v1.5h-1.5zM780.8 82.8h1.5v1.5h-1.5zM792.8 82.8h1.5v1.5h-1.5zM804.8 82.8h1.5v1.5h-1.5zM816.8 82.8h1.5v1.5h-1.5zM828.8 82.8h1.5v1.5h-1.5zM840.8 82.8h1.5v1.5h-1.5zM852.8 82.8h1.5v1.5h-1.5zM864.8 82.8h1.5v1.5h-1.5zM876.8 82.8h1.5v1.5h-1.5zM888.8 82.8h1.5v1.5h-1.5zM900.8 82.8h1.5v1.5h-1.5zM912.8 82.8h1.5v1.5h-1.5zM924.8 82.8h1.5v1.5h-1.5zM36.8 142.8h1.5v1.5h-1.5zM48.8 142.8h1.5v1.5h-1.5zM60.8 142.8h1.5v1.5h-1.5zM72.8 142.8h1.5v1.5h-1.5zM84.8 142.8h1.5v1.5h-1.5zM96.8 142.8h1.5v1.5h-1.5zM108.8 142.8h1.5v1.5h-1.5zM120.8 142.8h1.5v1.5h-1.5zM132.8 142.8h1.5v1.5h-1.5zM144.8 142.8h1.5v1.5h-1.5zM156.8 142.8h1.5v1.5h-1.5zM168.8 142.8h1.5v1.5h-1.5zM180.8 142.8h1.5v1.5h-1.5zM192.8 142.8h1.5v1.5h-1.5zM204.8 142.8h1.5v1.5h-1.5zM216.8 142.8h1.5v1.5h-1.5zM228.8 142.8h1.5v1.5h-1.5zM240.8 142.8h1.5v1.5h-1.5zM252.8 142.8h1.5v1.5h-1.5zM264.8 142.8h1.5v1.5h-1.5zM276.8 142.8h1.5v1.5h-1.5zM288.8 142.8h1.5v1.5h-1.5zM300.8 142.8h1.5v1.5h-1.5zM312.8 142.8h1.5v1.5h-1.5zM324.8 142.8h1.5v1.5h-1.5zM336.8 142.8h1.5v1.5h-1.5zM348.8 142.8h1.5v1.5h-1.5zM360.8 142.8h1.5v1.5h-1.5zM372.8 142.8h1.5v1.5h-1.5zM384.8 142.8h1.5v1.5h-1.5zM396.8 142.8h1.5v1.5h-1.5zM408.8 142.8h1.5v1.5h-1.5zM420.8 142.8h1.5v1.5h-1.5zM432.8 142.8h1.5v1.5h-1.5zM444.8 142.8h1.5v1.5h-1.5zM456.8 142.8h1.5v1.5h-1.5zM468.8 142.8h1.5v1.5h-1.5zM480.8 142.8h1.5v1.5h-1.5zM492.8 142.8h1.5v1.5h-1.5zM504.8 142.8h1.5v1.5h-1.5zM516.8 142.8h1.5v1.5h-1.5zM528.8 142.8h1.5v1.5h-1.5zM540.8 142.8h1.5v1.5h-1.5zM552.8 142.8h1.5v1.5h-1.5zM564.8 142.8h1.5v1.5h-1.5zM576.8 142.8h1.5v1.5h-1.5zM588.8 142.8h1.5v1.5h-1.5zM600.8 142.8h1.5v1.5h-1.5zM612.8 142.8h1.5v1.5h-1.5zM624.8 142.8h1.5v1.5h-1.5zM636.8 142.8h1.5v1.5h-1.5zM648.8 142.8h1.5v1.5h-1.5zM660.8 142.8h1.5v1.5h-1.5zM672.8 142.8h1.5v1.5h-1.5zM684.8 142.8h1.5v1.5h-1.5zM696.8 142.8h1.5v1.5h-1.5zM708.8 142.8h1.5v1.5h-1.5zM720.8 142.8h1.5v1.5h-1.5zM732.8 142.8h1.5v1.5h-1.5zM744.8 142.8h1.5v1.5h-1.5zM756.8 142.8h1.5v1.5h-1.5zM768.8 142.8h1.5v1.5h-1.5zM780.8 142.8h1.5v1.5h-1.5zM792.8 142.8h1.5v1.5h-1.5zM804.8 142.8h1.5v1.5h-1.5zM816.8 142.8h1.5v1.5h-1.5zM828.8 142.8h1.5v1.5h-1.5zM840.8 142.8h1.5v1.5h-1.5zM852.8 142.8h1.5v1.5h-1.5zM864.8 142.8h1.5v1.5h-1.5zM876.8 142.8h1.5v1.5h-1.5zM888.8 142.8h1.5v1.5h-1.5zM900.8 142.8h1.5v1.5h-1.5zM912.8 142.8h1.5v1.5h-1.5zM924.8 142.8h1.5v1.5h-1.5zM36.8 202.8h1.5v1.5h-1.5zM48.8 202.8h1.5v1.5h-1.5zM60.8 202.8h1.5v1.5h-1.5zM72.8 202.8h1.5v1.5h-1.5zM84.8 202.8h1.5v1.5h-1.5zM96.8 202.8h1.5v1.5h-1.5zM108.8 202.8h1.5v1.5h-1.5zM120.8 202.8h1.5v1.5h-1.5zM132.8 202.8h1.5v1.5h-1.5zM144.8 202.8h1.5v1.5h-1.5zM156.8 202.8h1.5v1.5h-1.5zM168.8 202.8h1.5v1.5h-1.5zM180.8 202.8h1.5v1.5h-1.5zM192.8 202.8h1.5v1.5h-1.5zM204.8 202.8h1.5v1.5h-1.5zM216.8 202.8h1.5v1.5h-1.5zM228.8 202.8h1.5v1.5h-1.5zM240.8 202.8h1.5v1.5h-1.5zM252.8 202.8h1.5v1.5h-1.5zM264.8 202.8h1.5v1.5h-1.5zM276.8 202.8h1.5v1.5h-1.5zM288.8 202.8h1.5v1.5h-1.5zM300.8 202.8h1.5v1.5h-1.5zM312.8 202.8h1.5v1.5h-1.5zM324.8 202.8h1.5v1.5h-1.5zM336.8 202.8h1.5v1.5h-1.5zM348.8 202.8h1.5v1.5h-1.5zM360.8 202.8h1.5v1.5h-1.5zM372.8 202.8h1.5v1.5h-1.5zM384.8 202.8h1.5v1.5h-1.5zM396.8 202.8h1.5v1.5h-1.5zM408.8 202.8h1.5v1.5h-1.5zM420.8 202.8h1.5v1.5h-1.5zM432.8 202.8h1.5v1.5h-1.5zM444.8 202.8h1.5v1.5h-1.5zM456.8 202.8h1.5v1.5h-1.5zM468.8 202.8h1.5v1.5h-1.5zM480.8 202.8h1.5v1.5h-1.5zM492.8 202.8h1.5v1.5h-1.5zM504.8 202.8h1.5v1.5h-1.5zM516.8 202.8h1.5v1.5h-1.5zM528.8 202.8h1.5v1.5h-1.5zM540.8 202.8h1.5v1.5h-1.5zM552.8 202.8h1.5v1.5h-1.5zM564.8 202.8h1.5v1.5h-1.5zM576.8 202.8h1.5v1.5h-1.5zM588.8 202.8h1.5v1.5h-1.5zM600.8 202.8h1.5v1.5h-1.5zM612.8 202.8h1.5v1.5h-1.5zM624.8 202.8h1.5v1.5h-1.5zM636.8 202.8h1.5v1.5h-1.5zM648.8 202.8h1.5v1.5h-1.5zM660.8 202.8h1.5v1.5h-1.5zM672.8 202.8h1.5v1.5h-1.5zM684.8 202.8h1.5v1.5h-1.5zM696.8 202.8h1.5v1.5h-1.5zM708.8 202.8h1.5v1.5h-1.5zM720.8 202.8h1.5v1.5h-1.5zM732.8 202.8h1.5v1.5h-1.5zM744.8 202.8h1.5v1.5h-1.5zM756.8 202.8h1.5v1.5h-1.5zM768.8 202.8h1.5v1.5h-1.5zM780.8 202.8h1.5v1.5h-1.5zM792.8 202.8h1.5v1.5h-1.5zM804.8 202.8h1.5v1.5h-1.5zM816.8 202.8h1.5v1.5h-1.5zM828.8 202.8h1.5v1.5h-1.5zM840.8 202.8h1.5v1.5h-1.5zM852.8 202.8h1.5v1.5h-1.5zM864.8 202.8h1.5v1.5h-1.5zM876.8 202.8h1.5v1.5h-1.5zM888.8 202.8h1.5v1.5h-1.5zM900.8 202.8h1.5v1.5h-1.5zM912.8 202.8h1.5v1.5h-1.5zM924.8 202.8h1.5v1.5h-1.5zM36.8 262.8h1.5v1.5h-1.5zM48.8 262.8h1.5v1.5h-1.5zM60.8 262.8h1.5v1.5h-1.5zM72.8 262.8h1.5v1.5h-1.5zM84.8 262.8h1.5v1.5h-1.5zM96.8 262.8h1.5v1.5h-1.5zM108.8 262.8h1.5v1.5h-1.5zM120.8 262.8h1.5v1.5h-1.5zM132.8 262.8h1.5v1.5h-1.5zM144.8 262.8h1.5v1.5h-1.5zM156.8 262.8h1.5v1.5h-1.5zM168.8 262.8h1.5v1.5h-1.5zM180.8 262.8h1.5v1.5h-1.5zM192.8 262.8h1.5v1.5h-1.5zM204.8 262.8h1.5v1.5h-1.5zM216.8 262.8h1.5v1.5h-1.5zM228.8 262.8h1.5v1.5h-1.5zM240.8 262.8h1.5v1.5h-1.5zM252.8 262.8h1.5v1.5h-1.5zM264.8 262.8h1.5v1.5h-1.5zM276.8 262.8h1.5v1.5h-1.5zM288.8 262.8h1.5v1.5h-1.5zM300.8 262.8h1.5v1.5h-1.5zM312.8 262.8h1.5v1.5h-1.5zM324.8 262.8h1.5v1.5h-1.5zM336.8 262.8h1.5v1.5h-1.5zM348.8 262.8h1.5v1.5h-1.5zM360.8 262.8h1.5v1.5h-1.5zM372.8 262.8h1.5v1.5h-1.5zM384.8 262.8h1.5v1.5h-1.5zM396.8 262.8h1.5v1.5h-1.5zM408.8 262.8h1.5v1.5h-1.5zM420.8 262.8h1.5v1.5h-1.5zM432.8 262.8h1.5v1.5h-1.5zM444.8 262.8h1.5v1.5h-1.5zM456.8 262.8h1.5v1.5h-1.5zM468.8 262.8h1.5v1.5h-1.5zM480.8 262.8h1.5v1.5h-1.5zM492.8 262.8h1.5v1.5h-1.5zM504.8 262.8h1.5v1.5h-1.5zM516.8 262.8h1.5v1.5h-1.5zM528.8 262.8h1.5v1.5h-1.5zM540.8 262.8h1.5v1.5h-1.5zM552.8 262.8h1.5v1.5h-1.5zM564.8 262.8h1.5v1.5h-1.5zM576.8 262.8h1.5v1.5h-1.5zM588.8 262.8h1.5v1.5h-1.5zM600.8 262.8h1.5v1.5h-1.5zM612.8 262.8h1.5v1.5h-1.5zM624.8 262.8h1.5v1.5h-1.5zM636.8 262.8h1.5v1.5h-1.5zM648.8 262.8h1.5v1.5h-1.5zM660.8 262.8h1.5v1.5h-1.5zM672.8 262.8h1.5v1.5h-1.5zM684.8 262.8h1.5v1.5h-1.5zM696.8 262.8h1.5v1.5h-1.5zM708.8 262.8h1.5v1.5h-1.5zM720.8 262.8h1.5v1.5h-1.5zM732.8 262.8h1.5v1.5h-1.5zM744.8 262.8h1.5v1.5h-1.5zM756.8 262.8h1.5v1.5h-1.5zM768.8 262.8h1.5v1.5h-1.5zM780.8 262.8h1.5v1.5h-1.5zM792.8 262.8h1.5v1.5h-1.5zM804.8 262.8h1.5v1.5h-1.5zM816.8 262.8h1.5v1.5h-1.5zM828.8 262.8h1.5v1.5h-1.5zM840.8 262.8h1.5v1.5h-1.5zM852.8 262.8h1.5v1.5h-1.5zM864.8 262.8h1.5v1.5h-1.5zM876.8 262.8h1.5v1.5h-1.5zM888.8 262.8h1.5v1.5h-1.5zM900.8 262.8h1.5v1.5h-1.5zM912.8 262.8h1.5v1.5h-1.5zM924.8 262.8h1.5v1.5h-1.5zM36.8 382.8h1.5v1.5h-1.5zM48.8 382.8h1.5v1.5h-1.5zM60.8 382.8h1.5v1.5h-1.5zM72.8 382.8h1.5v1.5h-1.5zM84.8 382.8h1.5v1.5h-1.5zM96.8 382.8h1.5v1.5h-1.5zM108.8 382.8h1.5v1.5h-1.5zM120.8 382.8h1.5v1.5h-1.5zM132.8 382.8h1.5v1.5h-1.5zM144.8 382.8h1.5v1.5h-1.5zM156.8 382.8h1.5v1.5h-1.5zM168.8 382.8h1.5v1.5h-1.5zM180.8 382.8h1.5v1.5h-1.5zM192.8 382.8h1.5v1.5h-1.5zM204.8 382.8h1.5v1.5h-1.5zM216.8 382.8h1.5v1.5h-1.5zM228.8 382.8h1.5v1.5h-1.5zM240.8 382.8h1.5v1.5h-1.5zM252.8 382.8h1.5v1.5h-1.5zM264.8 382.8h1.5v1.5h-1.5zM276.8 382.8h1.5v1.5h-1.5zM288.8 382.8h1.5v1.5h-1.5zM300.8 382.8h1.5v1.5h-1.5zM312.8 382.8h1.5v1.5h-1.5zM324.8 382.8h1.5v1.5h-1.5zM336.8 382.8h1.5v1.5h-1.5zM348.8 382.8h1.5v1.5h-1.5zM360.8 382.8h1.5v1.5h-1.5zM372.8 382.8h1.5v1.5h-1.5zM384.8 382.8h1.5v1.5h-1.5zM396.8 382.8h1.5v1.5h-1.5zM408.8 382.8h1.5v1.5h-1.5zM420.8 382.8h1.5v1.5h-1.5zM432.8 382.8h1.5v1.5h-1.5zM444.8 382.8h1.5v1.5h-1.5zM456.8 382.8h1.5v1.5h-1.5zM468.8 382.8h1.5v1.5h-1.5zM480.8 382.8h1.5v1.5h-1.5zM492.8 382.8h1.5v1.5h-1.5zM504.8 382.8h1.5v1.5h-1.5zM516.8 382.8h1.5v1.5h-1.5zM528.8 382.8h1.5v1.5h-1.5zM540.8 382.8h1.5v1.5h-1.5zM552.8 382.8h1.5v1.5h-1.5zM564.8 382.8h1.5v1.5h-1.5zM576.8 382.8h1.5v1.5h-1.5zM588.8 382.8h1.5v1.5h-1.5zM600.8 382.8h1.5v1.5h-1.5zM612.8 382.8h1.5v1.5h-1.5zM624.8 382.8h1.5v1.5h-1.5zM636.8 382.8h1.5v1.5h-1.5zM648.8 382.8h1.5v1.5h-1.5zM660.8 382.8h1.5v1.5h-1.5zM672.8 382.8h1.5v1.5h-1.5zM684.8 382.8h1.5v1.5h-1.5zM696.8 382.8h1.5v1.5h-1.5zM708.8 382.8h1.5v1.5h-1.5zM720.8 382.8h1.5v1.5h-1.5zM732.8 382.8h1.5v1.5h-1.5zM744.8 382.8h1.5v1.5h-1.5zM756.8 382.8h1.5v1.5h-1.5zM768.8 382.8h1.5v1.5h-1.5zM780.8 382.8h1.5v1.5h-1.5zM792.8 382.8h1.5v1.5h-1.5zM804.8 382.8h1.5v1.5h-1.5zM816.8 382.8h1.5v1.5h-1.5zM828.8 382.8h1.5v1.5h-1.5zM840.8 382.8h1.5v1.5h-1.5zM852.8 382.8h1.5v1.5h-1.5zM864.8 382.8h1.5v1.5h-1.5zM876.8 382.8h1.5v1.5h-1.5zM888.8 382.8h1.5v1.5h-1.5zM900.8 382.8h1.5v1.5h-1.5zM912.8 382.8h1.5v1.5h-1.5zM924.8 382.8h1.5v1.5h-1.5zM36.8 442.8h1.5v1.5h-1.5zM48.8 442.8h1.5v1.5h-1.5zM60.8 442.8h1.5v1.5h-1.5zM72.8 442.8h1.5v1.5h-1.5zM84.8 442.8h1.5v1.5h-1.5zM96.8 442.8h1.5v1.5h-1.5zM108.8 442.8h1.5v1.5h-1.5zM120.8 442.8h1.5v1.5h-1.5zM132.8 442.8h1.5v1.5h-1.5zM144.8 442.8h1.5v1.5h-1.5zM156.8 442.8h1.5v1.5h-1.5zM168.8 442.8h1.5v1.5h-1.5zM180.8 442.8h1.5v1.5h-1.5zM192.8 442.8h1.5v1.5h-1.5zM204.8 442.8h1.5v1.5h-1.5zM216.8 442.8h1.5v1.5h-1.5zM228.8 442.8h1.5v1.5h-1.5zM240.8 442.8h1.5v1.5h-1.5zM252.8 442.8h1.5v1.5h-1.5zM264.8 442.8h1.5v1.5h-1.5zM276.8 442.8h1.5v1.5h-1.5zM288.8 442.8h1.5v1.5h-1.5zM300.8 442.8h1.5v1.5h-1.5zM312.8 442.8h1.5v1.5h-1.5zM324.8 442.8h1.5v1.5h-1.5zM336.8 442.8h1.5v1.5h-1.5zM348.8 442.8h1.5v1.5h-1.5zM360.8 442.8h1.5v1.5h-1.5zM372.8 442.8h1.5v1.5h-1.5zM384.8 442.8h1.5v1.5h-1.5zM396.8 442.8h1.5v1.5h-1.5zM408.8 442.8h1.5v1.5h-1.5zM420.8 442.8h1.5v1.5h-1.5zM432.8 442.8h1.5v1.5h-1.5zM444.8 442.8h1.5v1.5h-1.5zM456.8 442.8h1.5v1.5h-1.5zM468.8 442.8h1.5v1.5h-1.5zM480.8 442.8h1.5v1.5h-1.5zM492.8 442.8h1.5v1.5h-1.5zM504.8 442.8h1.5v1.5h-1.5zM516.8 442.8h1.5v1.5h-1.5zM528.8 442.8h1.5v1.5h-1.5zM540.8 442.8h1.5v1.5h-1.5zM552.8 442.8h1.5v1.5h-1.5zM564.8 442.8h1.5v1.5h-1.5zM576.8 442.8h1.5v1.5h-1.5zM588.8 442.8h1.5v1.5h-1.5zM600.8 442.8h1.5v1.5h-1.5zM612.8 442.8h1.5v1.5h-1.5zM624.8 442.8h1.5v1.5h-1.5zM636.8 442.8h1.5v1.5h-1.5zM648.8 442.8h1.5v1.5h-1.5zM660.8 442.8h1.5v1.5h-1.5zM672.8 442.8h1.5v1.5h-1.5zM684.8 442.8h1.5v1.5h-1.5zM696.8 442.8h1.5v1.5h-1.5zM708.8 442.8h1.5v1.5h-1.5zM720.8 442.8h1.5v1.5h-1.5zM732.8 442.8h1.5v1.5h-1.5zM744.8 442.8h1.5v1.5h-1.5zM756.8 442.8h1.5v1.5h-1.5zM768.8 442.8h1.5v1.5h-1.5zM780.8 442.8h1.5v1.5h-1.5zM792.8 442.8h1.5v1.5h-1.5zM804.8 442.8h1.5v1.5h-1.5zM816.8 442.8h1.5v1.5h-1.5zM828.8 442.8h1.5v1.5h-1.5zM840.8 442.8h1.5v1.5h-1.5zM852.8 442.8h1.5v1.5h-1.5zM864.8 442.8h1.5v1.5h-1.5zM876.8 442.8h1.5v1.5h-1.5zM888.8 442.8h1.5v1.5h-1.5zM900.8 442.8h1.5v1.5h-1.5zM912.8 442.8h1.5v1.5h-1.5zM924.8 442.8h1.5v1.5h-1.5zM36.8 502.8h1.5v1.5h-1.5zM48.8 502.8h1.5v1.5h-1.5zM60.8 502.8h1.5v1.5h-1.5zM72.8 502.8h1.5v1.5h-1.5zM84.8 502.8h1.5v1.5h-1.5zM96.8 502.8h1.5v1.5h-1.5zM108.8 502.8h1.5v1.5h-1.5zM120.8 502.8h1.5v1.5h-1.5zM132.8 502.8h1.5v1.5h-1.5zM144.8 502.8h1.5v1.5h-1.5zM156.8 502.8h1.5v1.5h-1.5zM168.8 502.8h1.5v1.5h-1.5zM180.8 502.8h1.5v1.5h-1.5zM192.8 502.8h1.5v1.5h-1.5zM204.8 502.8h1.5v1.5h-1.5zM216.8 502.8h1.5v1.5h-1.5zM228.8 502.8h1.5v1.5h-1.5zM240.8 502.8h1.5v1.5h-1.5zM252.8 502.8h1.5v1.5h-1.5zM264.8 502.8h1.5v1.5h-1.5zM276.8 502.8h1.5v1.5h-1.5zM288.8 502.8h1.5v1.5h-1.5zM300.8 502.8h1.5v1.5h-1.5zM312.8 502.8h1.5v1.5h-1.5zM324.8 502.8h1.5v1.5h-1.5zM336.8 502.8h1.5v1.5h-1.5zM348.8 502.8h1.5v1.5h-1.5zM360.8 502.8h1.5v1.5h-1.5zM372.8 502.8h1.5v1.5h-1.5zM384.8 502.8h1.5v1.5h-1.5zM396.8 502.8h1.5v1.5h-1.5zM408.8 502.8h1.5v1.5h-1.5zM420.8 502.8h1.5v1.5h-1.5zM432.8 502.8h1.5v1.5h-1.5zM444.8 502.8h1.5v1.5h-1.5zM456.8 502.8h1.5v1.5h-1.5zM468.8 502.8h1.5v1.5h-1.5zM480.8 502.8h1.5v1.5h-1.5zM492.8 502.8h1.5v1.5h-1.5zM504.8 502.8h1.5v1.5h-1.5zM516.8 502.8h1.5v1.5h-1.5zM528.8 502.8h1.5v1.5h-1.5zM540.8 502.8h1.5v1.5h-1.5zM552.8 502.8h1.5v1.5h-1.5zM564.8 502.8h1.5v1.5h-1.5zM576.8 502.8h1.5v1.5h-1.5zM588.8 502.8h1.5v1.5h-1.5zM600.8 502.8h1.5v1.5h-1.5zM612.8 502.8h1.5v1.5h-1.5zM624.8 502.8h1.5v1.5h-1.5zM636.8 502.8h1.5v1.5h-1.5zM648.8 502.8h1.5v1.5h-1.5zM660.8 502.8h1.5v1.5h-1.5zM672.8 502.8h1.5v1.5h-1.5zM684.8 502.8h1.5v1.5h-1.5zM696.8 502.8h1.5v1.5h-1.5zM708.8 502.8h1.5v1.5h-1.5zM720.8 502.8h1.5v1.5h-1.5zM732.8 502.8h1.5v1.5h-1.5zM744.8 502.8h1.5v1.5h-1.5zM756.8 502.8h1.5v1.5h-1.5zM768.8 502.8h1.5v1.5h-1.5zM780.8 502.8h1.5v1.5h-1.5zM792.8 502.8h1.5v1.5h-1.5zM804.8 502.8h1.5v1.5h-1.5zM816.8 502.8h1.5v1.5h-1.5zM828.8 502.8h1.5v1.5h-1.5zM840.8 502.8h1.5v1.5h-1.5zM852.8 502.8h1.5v1.5h-1.5zM864.8 502.8h1.5v1.5h-1.5zM876.8 502.8h1.5v1.5h-1.5zM888.8 502.8h1.5v1.5h-1.5zM900.8 502.8h1.5v1.5h-1.5zM912.8 502.8h1.5v1.5h-1.5zM924.8 502.8h1.5v1.5h-1.5zM36.8 562.8h1.5v1.5h-1.5zM48.8 562.8h1.5v1.5h-1.5zM60.8 562.8h1.5v1.5h-1.5zM72.8 562.8h1.5v1.5h-1.5zM84.8 562.8h1.5v1.5h-1.5zM96.8 562.8h1.5v1.5h-1.5zM108.8 562.8h1.5v1.5h-1.5zM120.8 562.8h1.5v1.5h-1.5zM132.8 562.8h1.5v1.5h-1.5zM144.8 562.8h1.5v1.5h-1.5zM156.8 562.8h1.5v1.5h-1.5zM168.8 562.8h1.5v1.5h-1.5zM180.8 562.8h1.5v1.5h-1.5zM192.8 562.8h1.5v1.5h-1.5zM204.8 562.8h1.5v1.5h-1.5zM216.8 562.8h1.5v1.5h-1.5zM228.8 562.8h1.5v1.5h-1.5zM240.8 562.8h1.5v1.5h-1.5zM252.8 562.8h1.5v1.5h-1.5zM264.8 562.8h1.5v1.5h-1.5zM276.8 562.8h1.5v1.5h-1.5zM288.8 562.8h1.5v1.5h-1.5zM300.8 562.8h1.5v1.5h-1.5zM312.8 562.8h1.5v1.5h-1.5zM324.8 562.8h1.5v1.5h-1.5zM336.8 562.8h1.5v1.5h-1.5zM348.8 562.8h1.5v1.5h-1.5zM360.8 562.8h1.5v1.5h-1.5zM372.8 562.8h1.5v1.5h-1.5zM384.8 562.8h1.5v1.5h-1.5zM396.8 562.8h1.5v1.5h-1.5zM408.8 562.8h1.5v1.5h-1.5zM420.8 562.8h1.5v1.5h-1.5zM432.8 562.8h1.5v1.5h-1.5zM444.8 562.8h1.5v1.5h-1.5zM456.8 562.8h1.5v1.5h-1.5zM468.8 562.8h1.5v1.5h-1.5zM480.8 562.8h1.5v1.5h-1.5zM492.8 562.8h1.5v1.5h-1.5zM504.8 562.8h1.5v1.5h-1.5zM516.8 562.8h1.5v1.5h-1.5zM528.8 562.8h1.5v1.5h-1.5zM540.8 562.8h1.5v1.5h-1.5zM552.8 562.8h1.5v1.5h-1.5zM564.8 562.8h1.5v1.5h-1.5zM576.8 562.8h1.5v1.5h-1.5zM588.8 562.8h1.5v1.5h-1.5zM600.8 562.8h1.5v1.5h-1.5zM612.8 562.8h1.5v1.5h-1.5zM624.8 562.8h1.5v1.5h-1.5zM636.8 562.8h1.5v1.5h-1.5zM648.8 562.8h1.5v1.5h-1.5zM660.8 562.8h1.5v1.5h-1.5zM672.8 562.8h1.5v1.5h-1.5zM684.8 562.8h1.5v1.5h-1.5zM696.8 562.8h1.5v1.5h-1.5zM708.8 562.8h1.5v1.5h-1.5zM720.8 562.8h1.5v1.5h-1.5zM732.8 562.8h1.5v1.5h-1.5zM744.8 562.8h1.5v1.5h-1.5zM756.8 562.8h1.5v1.5h-1.5zM768.8 562.8h1.5v1.5h-1.5zM780.8 562.8h1.5v1.5h-1.5zM792.8 562.8h1.5v1.5h-1.5zM804.8 562.8h1.5v1.5h-1.5zM816.8 562.8h1.5v1.5h-1.5zM828.8 562.8h1.5v1.5h-1.5zM840.8 562.8h1.5v1.5h-1.5zM852.8 562.8h1.5v1.5h-1.5zM864.8 562.8h1.5v1.5h-1.5zM876.8 562.8h1.5v1.5h-1.5zM888.8 562.8h1.5v1.5h-1.5zM900.8 562.8h1.5v1.5h-1.5zM912.8 562.8h1.5v1.5h-1.5zM924.8 562.8h1.5v1.5h-1.5z" fill="#989898"/>
<path d="M37 322h1v3h-1zM49 322h1v3h-1zM61 322h1v3h-1zM73 322h1v3h-1zM85 322h1v3h-1zM97 322h1v3h-1zM109 322h1v3h-1zM121 322h1v3h-1zM133 322h1v3h-1zM145 322h1v3h-1zM157 322h1v3h-1zM169 322h1v3h-1zM181 322h1v3h-1zM193 322h1v3h-1zM205 322h1v3h-1zM217 322h1v3h-1zM229 322h1v3h-1zM241 322h1v3h-1zM253 322h1v3h-1zM265 322h1v3h-1zM277 322h1v3h-1zM289 322h1v3h-1zM301 322h1v3h-1zM313 322h1v3h-1zM325 322h1v3h-1zM337 322h1v3h-1zM349 322h1v3h-1zM361 322h1v3h-1zM373 322h1v3h-1zM385 322h1v3h-1zM397 322h1v3h-1zM409 322h1v3h-1zM421 322h1v3h-1zM433 322h1v3h-1zM445 322h1v3h-1zM457 322h1v3h-1zM469 322h1v3h-1zM481 322h1v3h-1zM493 322h1v3h-1zM505 322h1v3h-1zM517 322h1v3h-1zM529 322h1v3h-1zM541 322h1v3h-1zM553 322h1v3h-1zM565 322h1v3h-1zM577 322h1v3h-1zM589 322h1v3h-1zM601 322h1v3h-1zM613 322h1v3h-1zM625 322h1v3h-1zM637 322h1v3h-1zM649 322h1v3h-1zM661 322h1v3h-1zM673 322h1v3h-1zM685 322h1v3h-1zM697 322h1v3h-1zM709 322h1v3h-1zM721 322h1v3h-1zM733 322h1v3h-1zM745 322h1v3h-1zM757 322h1v3h-1zM769 322h1v3h-1zM781 322h1v3h-1zM793 322h1v3h-1zM805 322h1v3h-1zM817 322h1v3h-1zM829 322h1v3h-1zM841 322h1v3h-1zM853 322h1v3h-1zM865 322h1v3h-1zM877 322h1v3h-1zM889 322h1v3h-1zM901 322h1v3h-1zM913 322h1v3h-1zM925 322h1v3h-1zM480 35h3v1h-3zM480 47h3v1h-3zM480 59h3v1h-3zM480 71h3v1h-3zM480 83h3v1h-3zM480 95h3v1h-3zM480 107h3v1h-3zM480 119h3v1h-3zM480 131h3v1h-3zM480 143h3v1h-3zM480 155h3v1h-3zM480 167h3v1h-3zM480 179h3v1h-3zM480 191h3v1h-3zM480 203h3v1h-3zM480 215h3v1h-3zM480 227h3v1h-3zM480 239h3v1h-3zM480 251h3v1h-3zM480 263h3v1h-3zM480 275h3v1h-3zM480 287h3v1h-3zM480 299h3v1h-3zM480 311h3v1h-3zM480 323h3v1h-3zM480 335h3v1h-3zM480 347h3v1h-3zM480 359h3v1h-3zM480 371h3v1h-3zM480 383h3v1h-3zM480 395h3v1h-3zM480 407h3v1h-3zM480 419h3v1h-3zM480 431h3v1h-3zM480 443h3v1h-3zM480 455h3v1h-3zM480 467h3v1h-3zM480 479h3v1h-3zM480 491h3v1h-3zM480 503h3v1h-3zM480 515h3v1h-3zM480 527h3v1h-3zM480 539h3v1h-3zM480 551h3v1h-3zM480 563h3v1h-3zM480 575h3v1h-3zM480 587h3v1h-3zM480 599h3v1h-3zM480 611h3v1h-3z" fill="#e0e0e0"/>
<path d="M175 322.8h14v1.6h-14zM180.8 317h1.6v14h-1.6zM775 322.8h14v1.6h-14zM780.8 317h1.6v14h-1.6z" fill="#e8e8e8"/>
<path d="M37 25h1v3h-1zM37 618h1v3h-1zM49 25h1v3h-1zM49 618h1v3h-1zM61 25h1v7h-1zM61 614h1v7h-1zM73 25h1v3h-1zM73 618h1v3h-1zM85 25h1v3h-1zM85 618h1v3h-1zM97 25h1v3h-1zM97 618h1v3h-1zM109 25h1v3h-1zM109 618h1v3h-1zM121 25h1v7h-1zM121 614h1v7h-1zM133 25h1v3h-1zM133 618h1v3h-1zM145 25h1v3h-1zM145 618h1v3h-1zM157 25h1v3h-1zM157 618h1v3h-1zM169 25h1v3h-1zM169 618h1v3h-1zM181 25h1v7h-1zM181 614h1v7h-1zM193 25h1v3h-1zM193 618h1v3h-1zM205 25h1v3h-1zM205 618h1v3h-1zM217 25h1v3h-1zM217 618h1v3h-1zM229 25h1v3h-1zM229 618h1v3h-1zM241 25h1v7h-1zM241 614h1v7h-1zM253 25h1v3h-1zM253 618h1v3h-1zM265 25h1v3h-1zM265 618h1v3h-1zM277 25h1v3h-1zM277 618h1v3h-1zM289 25h1v3h-1zM289 618h1v3h-1zM301 25h1v7h-1zM301 614h1v7h-1zM313 25h1v3h-1zM313 618h1v3h-1zM325 25h1v3h-1zM325 618h1v3h-1zM337 25h1v3h-1zM337 618h1v3h-1zM349 25h1v3h-1zM349 618h1v3h-1zM361 25h1v7h-1zM361 614h1v7h-1zM373 25h1v3h-1zM373 618h1v3h-1zM385 25h1v3h-1zM385 618h1v3h-1zM397 25h1v3h-1zM397 618h1v3h-1zM409 25h1v3h-1zM409 618h1v3h-1zM421 25h1v7h-1zM421 614h1v7h-1zM433 25h1v3h-1zM433 618h1v3h-1zM445 25h1v3h-1zM445 618h1v3h-1zM457 25h1v3h-1zM457 618h1v3h-1zM469 25h1v3h-1zM469 618h1v3h-1zM481 25h1v7h-1zM481 614h1v7h-1zM493 25h1v3h-1zM493 618h1v3h-1zM505 25h1v3h-1zM505 618h1v3h-1zM517 25h1v3h-1zM517 618h1v3h-1zM529 25h1v3h-1zM529 618h1v3h-1zM541 25h1v7h-1zM541 614h1v7h-1zM553 25h1v3h-1zM553 618h1v3h-1zM565 25h1v3h-1zM565 618h1v3h-1zM577 25h1v3h-1zM577 618h1v3h-1zM589 25h1v3h-1zM589 618h1v3h-1zM601 25h1v7h-1zM601 614h1v7h-1zM613 25h1v3h-1zM613 618h1v3h-1zM625 25h1v3h-1zM625 618h1v3h-1zM637 25h1v3h-1zM637 618h1v3h-1zM649 25h1v3h-1zM649 618h1v3h-1zM661 25h1v7h-1zM661 614h1v7h-1zM673 25h1v3h-1zM673 618h1v3h-1zM685 25h1v3h-1zM685 618h1v3h-1zM697 25h1v3h-1zM697 618h1v3h-1zM709 25h1v3h-1zM709 618h1v3h-1zM721 25h1v7h-1zM721 614h1v7h-1zM733 25h1v3h-1zM733 618h1v3h-1zM745 25h1v3h-1zM745 618h1v3h-1zM757 25h1v3h-1zM757 618h1v3h-1zM769 25h1v3h-1zM769 618h1v3h-1zM781 25h1v7h-1zM781 614h1v7h-1zM793 25h1v3h-1zM793 618h1v3h-1zM805 25h1v3h-1zM805 618h1v3h-1zM817 25h1v3h-1zM817 618h1v3h-1zM829 25h1v3h-1zM829 618h1v3h-1zM841 25h1v7h-1zM841 614h1v7h-1zM853 25h1v3h-1zM853 618h1v3h-1zM865 25h1v3h-1zM865 618h1v3h-1zM877 25h1v3h-1zM877 618h1v3h-1zM889 25h1v3h-1zM889 618h1v3h-1zM901 25h1v7h-1zM901 614h1v7h-1zM913 25h1v3h-1zM913 618h1v3h-1zM925 25h1v3h-1zM925 618h1v3h-1zM26 35h4v1h-4zM930 35h4v1h-4zM26 47h4v1h-4zM930 47h4v1h-4zM26 59h4v1h-4zM930 59h4v1h-4zM26 71h4v1h-4zM930 71h4v1h-4zM26 83h7v1h-7zM927 83h7v1h-7zM26 95h4v1h-4zM930 95h4v1h-4zM26 107h4v1h-4zM930 107h4v1h-4zM26 119h4v1h-4zM930 119h4v1h-4zM26 131h4v1h-4zM930 131h4v1h-4zM26 143h7v1h-7zM927 143h7v1h-7zM26 155h4v1h-4zM930 155h4v1h-4zM26 167h4v1h-4zM930 167h4v1h-4zM26 179h4v1h-4zM930 179h4v1h-4zM26 191h4v1h-4zM930 191h4v1h-4zM26 203h7v1h-7zM927 203h7v1h-7zM26 215h4v1h-4zM930 215h4v1h-4zM26 227h4v1h-4zM930 227h4v1h-4zM26 239h4v1h-4zM930 239h4v1h-4zM26 251h4v1h-4zM930 251h4v1h-4zM26 263h7v1h-7zM927 263h7v1h-7zM26 275h4v1h-4zM930 275h4v1h-4zM26 287h4v1h-4zM930 287h4v1h-4zM26 299h4v1h-4zM930 299h4v1h-4zM26 311h4v1h-4zM930 311h4v1h-4zM26 323h7v1h-7zM927 323h7v1h-7zM26 335h4v1h-4zM930 335h4v1h-4zM26 347h4v1h-4zM930 347h4v1h-4zM26 359h4v1h-4zM930 359h4v1h-4zM26 371h4v1h-4zM930 371h4v1h-4zM26 383h7v1h-7zM927 383h7v1h-7zM26 395h4v1h-4zM930 395h4v1h-4zM26 407h4v1h-4zM930 407h4v1h-4zM26 419h4v1h-4zM930 419h4v1h-4zM26 431h4v1h-4zM930 431h4v1h-4zM26 443h7v1h-7zM927 443h7v1h-7zM26 455h4v1h-4zM930 455h4v1h-4zM26 467h4v1h-4zM930 467h4v1h-4zM26 479h4v1h-4zM930 479h4v1h-4zM26 491h4v1h-4zM930 491h4v1h-4zM26 503h7v1h-7zM927 503h7v1h-7zM26 515h4v1h-4zM930 515h4v1h-4zM26 527h4v1h-4zM930 527h4v1h-4zM26 539h4v1h-4zM930 539h4v1h-4zM26 551h4v1h-4zM930 551h4v1h-4zM26 563h7v1h-7zM927 563h7v1h-7zM26 575h4v1h-4zM930 575h4v1h-4zM26 587h4v1h-4zM930 587h4v1h-4zM26 599h4v1h-4zM930 599h4v1h-4zM26 611h4v1h-4zM930 611h4v1h-4z" fill="#e8e8e8"/>
<rect x="24" y="23" width="912" height="2" fill="#f4f4f4"/>
<rect x="24" y="621" width="912" height="2" fill="#f4f4f4"/>
<rect x="24" y="23" width="2" height="600" fill="#f4f4f4"/>
<rect x="934" y="23" width="2" height="600" fill="#f4f4f4"/>
<path d="M26.0 180.8h1.2V184.0h-1.2zM27.2 179.6h1.2V184.0h-1.2zM28.4 179.5h1.2V185.1h-1.2zM29.6 179.5h1.2V185.1h-1.2zM30.8 179.4h1.2V183.8h-1.2zM32.0 180.6h1.2V183.8h-1.2zM33.2 179.4h1.2V183.8h-1.2zM34.4 179.3h1.2V183.7h-1.2zM35.6 179.3h1.2V183.7h-1.2zM36.8 179.3h1.2V183.7h-1.2zM38.0 179.2h1.2V183.6h-1.2zM39.2 179.2h1.2V182.4h-1.2zM40.4 179.2h1.2V183.6h-1.2zM41.6 180.4h1.2V184.8h-1.2zM42.8 179.2h1.2V184.8h-1.2zM44.0 179.2h1.2V182.4h-1.2zM45.2 179.2h1.2V184.8h-1.2zM46.4 181.6h1.2V186.0h-1.2zM47.6 180.4h1.2V186.0h-1.2zM48.8 180.4h1.2V183.6h-1.2zM50.0 180.4h1.2V186.0h-1.2zM51.2 179.2h1.2V186.0h-1.2zM52.4 179.2h1.2V184.8h-1.2zM53.6 180.4h1.2V184.8h-1.2zM54.8 179.1h1.2V183.5h-1.2zM56.0 179.1h1.2V182.3h-1.2zM57.2 179.1h1.2V183.5h-1.2zM58.4 180.3h1.2V184.7h-1.2zM59.6 179.0h1.2V184.6h-1.2zM60.8 179.0h1.2V183.4h-1.2zM62.0 180.1h1.2V184.5h-1.2zM63.2 180.1h1.2V184.5h-1.2zM64.4 180.0h1.2V183.2h-1.2zM65.6 178.8h1.2V183.2h-1.2zM66.8 178.7h1.2V181.9h-1.2zM68.0 178.7h1.2V181.9h-1.2zM69.2 178.6h1.2V184.2h-1.2zM70.4 179.8h1.2V184.2h-1.2zM71.6 179.7h1.2V182.9h-1.2zM72.8 179.7h1.2V182.9h-1.2zM74.0 179.7h1.2V182.9h-1.2zM75.2 179.6h1.2V182.8h-1.2zM76.4 179.6h1.2V184.0h-1.2zM77.6 180.8h1.2V184.0h-1.2zM78.8 178.4h1.2V184.0h-1.2zM80.0 178.4h1.2V182.8h-1.2zM81.2 179.6h1.2V182.8h-1.2zM82.4 179.6h1.2V185.2h-1.2zM83.6 180.8h1.2V185.2h-1.2zM84.8 179.6h1.2V184.0h-1.2zM86.0 179.6h1.2V185.2h-1.2zM87.2 178.5h1.2V185.3h-1.2zM88.4 178.5h1.2V182.9h-1.2zM89.6 179.7h1.2V184.1h-1.2zM90.8 178.6h1.2V184.2h-1.2zM92.0 178.6h1.2V183.0h-1.2zM93.2 178.7h1.2V183.1h-1.2zM94.4 178.7h1.2V184.3h-1.2zM95.6 181.2h1.2V184.4h-1.2zM96.8 180.0h1.2V184.4h-1.2zM98.0 180.1h1.2V185.7h-1.2zM99.2 180.1h1.2V185.7h-1.2zM100.4 180.1h1.2V184.5h-1.2zM101.6 180.2h1.2V184.6h-1.2zM102.8 180.2h1.2V183.4h-1.2zM104.0 180.2h1.2V183.4h-1.2zM105.2 180.2h1.2V184.6h-1.2zM106.4 181.4h1.2V185.8h-1.2zM107.6 180.2h1.2V185.8h-1.2zM108.8 180.3h1.2V184.7h-1.2zM110.0 179.1h1.2V184.7h-1.2zM111.2 179.0h1.2V184.6h-1.2zM112.4 181.4h1.2V184.6h-1.2zM113.6 181.4h1.2V185.8h-1.2zM114.8 181.4h1.2V185.8h-1.2zM116.0 180.2h1.2V184.6h-1.2zM117.2 180.2h1.2V183.4h-1.2zM118.4 180.2h1.2V184.6h-1.2zM119.6 179.0h1.2V184.6h-1.2zM120.8 179.0h1.2V183.4h-1.2zM122.0 179.0h1.2V183.4h-1.2zM123.2 179.0h1.2V182.2h-1.2zM124.4 179.0h1.2V182.2h-1.2zM125.6 179.0h1.2V184.6h-1.2zM126.8 179.0h1.2V184.6h-1.2zM128.0 179.0h1.2V182.2h-1.2zM129.2 179.1h1.2V183.5h-1.2zM130.4 180.3h1.2V185.9h-1.2zM131.6 179.1h1.2V185.9h-1.2zM132.8 179.2h1.2V183.6h-1.2zM134.0 180.4h1.2V183.6h-1.2zM135.2 180.4h1.2V186.0h-1.2zM136.4 181.7h1.2V186.1h-1.2zM137.6 181.7h1.2V186.1h-1.2zM138.8 179.3h1.2V186.1h-1.2zM140.0 179.4h1.2V183.8h-1.2zM141.2 180.6h1.2V183.8h-1.2zM142.4 180.6h1.2V186.2h-1.2zM143.6 183.1h1.2V186.3h-1.2zM144.8 179.5h1.2V186.3h-1.2zM146.0 179.5h1.2V182.7h-1.2zM147.2 179.5h1.2V182.7h-1.2zM148.4 179.5h1.2V182.7h-1.2zM149.6 179.5h1.2V183.9h-1.2zM150.8 180.7h1.2V183.9h-1.2zM152.0 179.4h1.2V183.8h-1.2zM153.2 179.4h1.2V182.6h-1.2zM154.4 179.4h1.2V183.8h-1.2zM155.6 180.5h1.2V183.7h-1.2zM156.8 180.5h1.2V183.7h-1.2zM158.0 180.5h1.2V186.1h-1.2zM159.2 181.6h1.2V186.0h-1.2zM160.4 180.4h1.2V184.8h-1.2zM161.6 180.3h1.2V183.5h-1.2zM162.8 180.3h1.2V184.7h-1.2zM164.0 179.0h1.2V184.6h-1.2zM165.2 179.0h1.2V185.8h-1.2zM166.4 181.3h1.2V185.7h-1.2zM167.6 181.3h1.2V185.7h-1.2zM168.8 181.3h1.2V185.7h-1.2zM170.0 180.0h1.2V184.4h-1.2zM171.2 180.0h1.2V183.2h-1.2zM172.4 178.8h1.2V183.2h-1.2zM173.6 178.8h1.2V184.4h-1.2zM174.8 178.8h1.2V184.4h-1.2zM176.0 178.8h1.2V182.0h-1.2zM177.2 178.8h1.2V182.0h-1.2zM178.4 178.8h1.2V182.0h-1.2zM179.6 178.8h1.2V183.2h-1.2zM180.8 178.9h1.2V183.3h-1.2zM182.0 178.9h1.2V182.1h-1.2zM183.2 178.9h1.2V182.1h-1.2zM184.4 178.9h1.2V182.1h-1.2zM185.6 179.0h1.2V183.4h-1.2zM186.8 179.0h1.2V183.4h-1.2zM188.0 179.0h1.2V185.8h-1.2zM189.2 180.2h1.2V185.8h-1.2zM190.4 179.1h1.2V183.5h-1.2zM191.6 179.1h1.2V182.3h-1.2zM192.8 179.1h1.2V183.5h-1.2zM194.0 180.3h1.2V183.5h-1.2zM195.2 179.1h1.2V183.5h-1.2zM196.4 179.1h1.2V184.7h-1.2zM197.6 181.5h1.2V185.9h-1.2zM198.8 180.3h1.2V185.9h-1.2zM200.0 180.3h1.2V183.5h-1.2zM201.2 179.1h1.2V183.5h-1.2zM202.4 179.1h1.2V182.3h-1.2zM203.6 179.1h1.2V183.5h-1.2zM204.8 179.1h1.2V183.5h-1.2zM206.0 179.1h1.2V184.7h-1.2zM207.2 179.1h1.2V184.7h-1.2zM208.4 179.0h1.2V182.2h-1.2zM209.6 179.0h1.2V185.8h-1.2zM210.8 180.2h1.2V185.8h-1.2zM212.0 179.0h1.2V183.4h-1.2zM213.2 179.0h1.2V183.4h-1.2zM214.4 179.1h1.2V183.5h-1.2zM215.6 179.1h1.2V183.5h-1.2zM216.8 180.3h1.2V185.9h-1.2zM218.0 182.7h1.2V185.9h-1.2zM219.2 181.6h1.2V186.0h-1.2zM220.4 179.2h1.2V184.8h-1.2zM221.6 179.2h1.2V183.6h-1.2zM222.8 179.3h1.2V183.7h-1.2zM224.0 179.3h1.2V184.9h-1.2zM225.2 180.6h1.2V185.0h-1.2zM226.4 180.7h1.2V185.1h-1.2zM227.6 180.7h1.2V185.1h-1.2zM228.8 179.6h1.2V184.0h-1.2zM230.0 179.6h1.2V185.2h-1.2zM231.2 182.1h1.2V186.5h-1.2zM232.4 182.2h1.2V186.6h-1.2zM233.6 182.2h1.2V185.4h-1.2zM234.8 182.3h1.2V185.5h-1.2zM236.0 182.3h1.2V185.5h-1.2zM237.2 179.9h1.2V185.5h-1.2zM238.4 180.0h1.2V184.4h-1.2zM239.6 181.2h1.2V184.4h-1.2zM240.8 180.0h1.2V184.4h-1.2zM242.0 180.1h1.2V183.3h-1.2zM243.2 180.1h1.2V183.3h-1.2zM244.4 180.1h1.2V183.3h-1.2zM245.6 180.1h1.2V185.7h-1.2zM246.8 182.4h1.2V186.8h-1.2zM248.0 181.2h1.2V186.8h-1.2zM249.2 181.2h1.2V186.8h-1.2zM250.4 183.6h1.2V186.8h-1.2zM251.6 183.6h1.2V186.8h-1.2zM252.8 181.1h1.2V186.7h-1.2zM254.0 179.9h1.2V184.3h-1.2zM255.2 179.9h1.2V183.1h-1.2zM256.4 179.8h1.2V183.0h-1.2zM257.6 179.8h1.2V183.0h-1.2zM258.8 179.8h1.2V185.4h-1.2zM260.0 182.1h1.2V186.5h-1.2zM261.2 182.1h1.2V186.5h-1.2zM262.4 180.9h1.2V185.3h-1.2zM263.6 180.9h1.2V185.3h-1.2zM264.8 182.1h1.2V185.3h-1.2zM266.0 179.7h1.2V185.3h-1.2zM267.2 179.7h1.2V185.3h-1.2zM268.4 182.1h1.2V186.5h-1.2zM269.6 182.1h1.2V186.5h-1.2zM270.8 182.1h1.2V185.3h-1.2zM272.0 180.9h1.2V185.3h-1.2zM273.2 179.7h1.2V184.1h-1.2zM274.4 179.7h1.2V185.3h-1.2zM275.6 180.9h1.2V185.3h-1.2zM276.8 180.9h1.2V185.3h-1.2zM278.0 182.1h1.2V186.5h-1.2zM279.2 180.9h1.2V186.5h-1.2zM280.4 180.9h1.2V184.1h-1.2zM281.6 180.9h1.2V186.5h-1.2zM282.8 182.1h1.2V186.5h-1.2zM284.0 179.6h1.2V185.2h-1.2zM285.2 179.6h1.2V182.8h-1.2zM286.4 179.6h1.2V182.8h-1.2zM287.6 179.6h1.2V186.4h-1.2zM288.8 181.9h1.2V186.3h-1.2zM290.0 179.5h1.2V185.1h-1.2zM291.2 179.4h1.2V185.0h-1.2zM292.4 181.8h1.2V186.2h-1.2zM293.6 181.7h1.2V186.1h-1.2zM294.8 180.5h1.2V184.9h-1.2zM296.0 180.4h1.2V183.6h-1.2zM297.2 179.1h1.2V183.5h-1.2zM298.4 179.1h1.2V182.3h-1.2zM299.6 179.0h1.2V185.8h-1.2zM300.8 181.3h1.2V185.7h-1.2zM302.0 180.1h1.2V184.5h-1.2zM303.2 180.0h1.2V185.6h-1.2zM304.4 180.0h1.2V185.6h-1.2zM305.6 180.0h1.2V185.6h-1.2zM306.8 181.1h1.2V185.5h-1.2zM308.0 178.7h1.2V184.3h-1.2zM309.2 178.7h1.2V181.9h-1.2zM310.4 178.6h1.2V183.0h-1.2zM311.6 178.6h1.2V183.0h-1.2zM312.8 178.6h1.2V183.0h-1.2zM314.0 178.6h1.2V183.0h-1.2zM315.2 178.7h1.2V183.1h-1.2zM316.4 178.7h1.2V183.1h-1.2zM317.6 178.7h1.2V185.5h-1.2zM318.8 179.9h1.2V185.5h-1.2zM320.0 179.9h1.2V183.1h-1.2zM321.2 180.0h1.2V183.2h-1.2zM322.4 180.0h1.2V185.6h-1.2zM323.6 180.0h1.2V185.6h-1.2zM324.8 180.1h1.2V185.7h-1.2zM326.0 180.1h1.2V185.7h-1.2zM327.2 180.1h1.2V183.3h-1.2zM328.4 180.2h1.2V183.4h-1.2zM329.6 179.0h1.2V183.4h-1.2zM330.8 179.0h1.2V183.4h-1.2zM332.0 179.0h1.2V183.4h-1.2zM333.2 179.0h1.2V182.2h-1.2zM334.4 179.0h1.2V184.6h-1.2zM335.6 179.0h1.2V184.6h-1.2zM336.8 179.0h1.2V183.4h-1.2zM338.0 180.2h1.2V184.6h-1.2zM339.2 180.2h1.2V184.6h-1.2zM340.4 180.2h1.2V183.4h-1.2zM341.6 180.2h1.2V183.4h-1.2zM342.8 180.2h1.2V183.4h-1.2zM344.0 180.2h1.2V184.6h-1.2zM345.2 178.9h1.2V184.5h-1.2zM346.4 178.9h1.2V183.3h-1.2zM347.6 178.9h1.2V183.3h-1.2zM348.8 178.9h1.2V182.1h-1.2zM350.0 178.9h1.2V184.5h-1.2zM351.2 180.1h1.2V184.5h-1.2zM352.4 180.1h1.2V183.3h-1.2zM353.6 180.1h1.2V184.5h-1.2zM354.8 181.3h1.2V185.7h-1.2zM356.0 180.1h1.2V185.7h-1.2zM357.2 180.2h1.2V183.4h-1.2zM358.4 180.2h1.2V183.4h-1.2zM359.6 180.2h1.2V183.4h-1.2zM360.8 180.2h1.2V184.6h-1.2zM362.0 180.3h1.2V184.7h-1.2zM363.2 180.3h1.2V183.5h-1.2zM364.4 180.4h1.2V183.6h-1.2zM365.6 180.4h1.2V186.0h-1.2zM366.8 181.6h1.2V186.0h-1.2zM368.0 181.7h1.2V186.1h-1.2zM369.2 182.9h1.2V186.1h-1.2zM370.4 179.3h1.2V186.1h-1.2zM371.6 179.4h1.2V183.8h-1.2zM372.8 180.6h1.2V186.2h-1.2zM374.0 181.8h1.2V186.2h-1.2zM375.2 179.4h1.2V185.0h-1.2zM376.4 179.4h1.2V182.6h-1.2zM377.6 179.4h1.2V183.8h-1.2zM378.8 179.4h1.2V183.8h-1.2zM380.0 179.4h1.2V182.6h-1.2zM381.2 179.4h1.2V182.6h-1.2zM382.4 179.4h1.2V185.0h-1.2zM383.6 181.8h1.2V185.0h-1.2zM384.8 181.7h1.2V186.1h-1.2zM386.0 179.3h1.2V186.1h-1.2zM387.2 179.2h1.2V184.8h-1.2zM388.4 181.6h1.2V184.8h-1.2zM389.6 179.1h1.2V184.7h-1.2zM390.8 179.1h1.2V185.9h-1.2zM392.0 182.6h1.2V185.8h-1.2zM393.2 179.0h1.2V185.8h-1.2zM394.4 179.0h1.2V185.8h-1.2zM395.6 180.1h1.2V185.7h-1.2zM396.8 180.1h1.2V183.3h-1.2zM398.0 180.0h1.2V185.6h-1.2zM399.2 181.2h1.2V185.6h-1.2zM400.4 178.8h1.2V184.4h-1.2zM401.6 178.7h1.2V183.1h-1.2zM402.8 179.9h1.2V183.1h-1.2zM404.0 179.9h1.2V183.1h-1.2zM405.2 178.7h1.2V183.1h-1.2zM406.4 178.7h1.2V183.1h-1.2zM407.6 179.9h1.2V184.3h-1.2zM408.8 178.7h1.2V184.3h-1.2zM410.0 178.7h1.2V183.1h-1.2zM411.2 179.9h1.2V183.1h-1.2zM412.4 178.8h1.2V183.2h-1.2zM413.6 178.8h1.2V183.2h-1.2zM414.8 180.0h1.2V184.4h-1.2zM416.0 180.0h1.2V184.4h-1.2zM417.2 178.8h1.2V183.2h-1.2zM418.4 178.8h1.2V185.6h-1.2zM419.6 181.2h1.2V185.6h-1.2zM420.8 181.3h1.2V185.7h-1.2zM422.0 178.9h1.2V185.7h-1.2zM423.2 178.9h1.2V182.1h-1.2zM424.4 178.9h1.2V182.1h-1.2zM425.6 178.9h1.2V184.5h-1.2zM426.8 178.8h1.2V184.4h-1.2zM428.0 178.8h1.2V182.0h-1.2zM429.2 178.8h1.2V183.2h-1.2zM430.4 180.0h1.2V185.6h-1.2zM431.6 181.2h1.2V185.6h-1.2zM432.8 178.7h1.2V184.3h-1.2zM434.0 178.7h1.2V181.9h-1.2zM435.2 178.7h1.2V185.5h-1.2zM436.4 179.9h1.2V185.5h-1.2zM437.6 179.9h1.2V184.3h-1.2zM438.8 178.6h1.2V184.2h-1.2zM440.0 178.6h1.2V181.8h-1.2zM441.2 178.6h1.2V184.2h-1.2zM442.4 179.8h1.2V184.2h-1.2zM443.6 178.6h1.2V183.0h-1.2zM444.8 178.6h1.2V185.4h-1.2zM446.0 181.0h1.2V185.4h-1.2zM447.2 181.1h1.2V184.3h-1.2zM448.4 178.7h1.2V184.3h-1.2zM449.6 178.7h1.2V184.3h-1.2zM450.8 178.8h1.2V184.4h-1.2zM452.0 178.8h1.2V185.6h-1.2zM453.2 180.1h1.2V185.7h-1.2zM454.4 180.1h1.2V183.3h-1.2zM455.6 180.2h1.2V183.4h-1.2zM456.8 180.3h1.2V185.9h-1.2zM458.0 179.1h1.2V185.9h-1.2zM459.2 179.2h1.2V182.4h-1.2zM460.4 179.3h1.2V183.7h-1.2zM461.6 179.3h1.2V183.7h-1.2zM462.8 179.4h1.2V182.6h-1.2zM464.0 179.4h1.2V182.6h-1.2zM465.2 179.5h1.2V182.7h-1.2zM466.4 179.5h1.2V182.7h-1.2zM467.6 179.6h1.2V184.0h-1.2zM468.8 180.8h1.2V184.0h-1.2zM470.0 180.9h1.2V185.3h-1.2zM471.2 180.9h1.2V185.3h-1.2zM472.4 180.9h1.2V184.1h-1.2zM473.6 179.7h1.2V184.1h-1.2zM474.8 179.8h1.2V184.2h-1.2zM476.0 179.8h1.2V184.2h-1.2zM477.2 179.8h1.2V183.0h-1.2zM478.4 179.8h1.2V183.0h-1.2zM479.6 179.8h1.2V185.4h-1.2zM480.8 181.0h1.2V185.4h-1.2zM482.0 179.7h1.2V184.1h-1.2zM483.2 179.7h1.2V184.1h-1.2zM484.4 180.9h1.2V186.5h-1.2zM485.6 179.7h1.2V186.5h-1.2zM486.8 179.7h1.2V185.3h-1.2zM488.0 180.9h1.2V185.3h-1.2zM489.2 180.9h1.2V184.1h-1.2zM490.4 180.9h1.2V185.3h-1.2zM491.6 180.9h1.2V185.3h-1.2zM492.8 180.9h1.2V184.1h-1.2zM494.0 180.9h1.2V185.3h-1.2zM495.2 182.1h1.2V186.5h-1.2zM496.4 180.9h1.2V186.5h-1.2zM497.6 180.9h1.2V185.3h-1.2zM498.8 182.2h1.2V185.4h-1.2zM500.0 182.2h1.2V185.4h-1.2zM501.2 181.0h1.2V185.4h-1.2zM502.4 181.0h1.2V184.2h-1.2zM503.6 179.9h1.2V184.3h-1.2zM504.8 179.9h1.2V183.1h-1.2zM506.0 179.9h1.2V183.1h-1.2zM507.2 179.9h1.2V185.5h-1.2zM508.4 179.9h1.2V185.5h-1.2zM509.6 179.9h1.2V183.1h-1.2zM510.8 180.0h1.2V183.2h-1.2zM512.0 180.0h1.2V185.6h-1.2zM513.2 182.3h1.2V186.7h-1.2zM514.4 182.3h1.2V186.7h-1.2zM515.6 181.1h1.2V185.5h-1.2zM516.8 179.9h1.2V184.3h-1.2zM518.0 179.9h1.2V184.3h-1.2zM519.2 181.0h1.2V184.2h-1.2zM520.4 179.8h1.2V184.2h-1.2zM521.6 179.7h1.2V184.1h-1.2zM522.8 179.7h1.2V184.1h-1.2zM524.0 179.6h1.2V186.4h-1.2zM525.2 183.2h1.2V186.4h-1.2zM526.4 180.7h1.2V186.3h-1.2zM527.6 179.5h1.2V183.9h-1.2zM528.8 179.4h1.2V186.2h-1.2zM530.0 180.5h1.2V186.1h-1.2zM531.2 180.5h1.2V183.7h-1.2zM532.4 179.2h1.2V183.6h-1.2zM533.6 179.2h1.2V183.6h-1.2zM534.8 180.3h1.2V183.5h-1.2zM536.0 180.3h1.2V183.5h-1.2zM537.2 179.1h1.2V183.5h-1.2zM538.4 179.0h1.2V183.4h-1.2zM539.6 179.0h1.2V183.4h-1.2zM540.8 179.0h1.2V182.2h-1.2zM542.0 179.0h1.2V182.2h-1.2zM543.2 179.0h1.2V183.4h-1.2zM544.4 179.0h1.2V183.4h-1.2zM545.6 179.0h1.2V182.2h-1.2zM546.8 179.0h1.2V183.4h-1.2zM548.0 179.0h1.2V183.4h-1.2zM549.2 179.0h1.2V183.4h-1.2zM550.4 180.3h1.2V183.5h-1.2zM551.6 180.3h1.2V184.7h-1.2zM552.8 181.5h1.2V184.7h-1.2zM554.0 181.5h1.2V184.7h-1.2zM555.2 181.5h1.2V185.9h-1.2zM556.4 180.4h1.2V186.0h-1.2zM557.6 180.4h1.2V183.6h-1.2zM558.8 180.4h1.2V186.0h-1.2zM560.0 179.2h1.2V186.0h-1.2zM561.2 179.2h1.2V184.8h-1.2zM562.4 181.6h1.2V184.8h-1.2zM563.6 179.2h1.2V184.8h-1.2zM564.8 179.2h1.2V184.8h-1.2zM566.0 181.6h1.2V186.0h-1.2zM567.2 181.6h1.2V186.0h-1.2zM568.4 181.6h1.2V184.8h-1.2zM569.6 181.6h1.2V184.8h-1.2zM570.8 179.1h1.2V184.7h-1.2zM572.0 179.1h1.2V183.5h-1.2zM573.2 180.3h1.2V183.5h-1.2zM574.4 180.3h1.2V184.7h-1.2zM575.6 181.5h1.2V184.7h-1.2zM576.8 181.4h1.2V184.6h-1.2zM578.0 180.2h1.2V184.6h-1.2zM579.2 180.2h1.2V185.8h-1.2zM580.4 181.4h1.2V185.8h-1.2zM581.6 181.4h1.2V184.6h-1.2zM582.8 179.0h1.2V184.6h-1.2zM584.0 179.0h1.2V182.2h-1.2zM585.2 179.0h1.2V182.2h-1.2zM586.4 179.1h1.2V183.5h-1.2zM587.6 179.1h1.2V183.5h-1.2zM588.8 179.1h1.2V184.7h-1.2zM590.0 180.3h1.2V184.7h-1.2zM591.2 180.4h1.2V184.8h-1.2zM592.4 181.6h1.2V184.8h-1.2zM593.6 181.7h1.2V184.9h-1.2zM594.8 180.5h1.2V184.9h-1.2zM596.0 179.3h1.2V183.7h-1.2zM597.2 179.4h1.2V185.0h-1.2zM598.4 181.8h1.2V185.0h-1.2zM599.6 180.7h1.2V185.1h-1.2zM600.8 180.7h1.2V183.9h-1.2zM602.0 180.7h1.2V185.1h-1.2zM603.2 179.6h1.2V185.2h-1.2zM604.4 179.6h1.2V185.2h-1.2zM605.6 179.6h1.2V185.2h-1.2zM606.8 179.6h1.2V182.8h-1.2zM608.0 179.6h1.2V182.8h-1.2zM609.2 179.6h1.2V185.2h-1.2zM610.4 179.6h1.2V185.2h-1.2zM611.6 179.6h1.2V185.2h-1.2zM612.8 181.9h1.2V186.3h-1.2zM614.0 180.7h1.2V186.3h-1.2zM615.2 180.7h1.2V183.9h-1.2zM616.4 180.6h1.2V183.8h-1.2zM617.6 180.6h1.2V185.0h-1.2zM618.8 181.7h1.2V184.9h-1.2zM620.0 180.5h1.2V184.9h-1.2zM621.2 180.5h1.2V184.9h-1.2zM622.4 179.2h1.2V184.8h-1.2zM623.6 179.2h1.2V182.4h-1.2zM624.8 179.1h1.2V182.3h-1.2zM626.0 179.1h1.2V184.7h-1.2zM627.2 180.2h1.2V184.6h-1.2zM628.4 180.2h1.2V183.4h-1.2zM629.6 179.0h1.2V183.4h-1.2zM630.8 178.9h1.2V182.1h-1.2zM632.0 178.9h1.2V182.1h-1.2zM633.2 178.9h1.2V184.5h-1.2zM634.4 181.3h1.2V184.5h-1.2zM635.6 181.3h1.2V184.5h-1.2zM636.8 180.1h1.2V184.5h-1.2zM638.0 180.1h1.2V183.3h-1.2zM639.2 180.1h1.2V183.3h-1.2zM640.4 180.1h1.2V183.3h-1.2zM641.6 178.9h1.2V183.3h-1.2zM642.8 178.9h1.2V185.7h-1.2zM644.0 178.9h1.2V185.7h-1.2zM645.2 178.9h1.2V185.7h-1.2zM646.4 182.5h1.2V185.7h-1.2zM647.6 178.9h1.2V185.7h-1.2zM648.8 178.9h1.2V183.3h-1.2zM650.0 180.1h1.2V184.5h-1.2zM651.2 181.3h1.2V185.7h-1.2zM652.4 180.1h1.2V185.7h-1.2zM653.6 178.8h1.2V183.2h-1.2zM654.8 178.8h1.2V182.0h-1.2zM656.0 178.8h1.2V185.6h-1.2zM657.2 178.8h1.2V185.6h-1.2zM658.4 178.7h1.2V183.1h-1.2zM659.6 178.7h1.2V183.1h-1.2zM660.8 178.6h1.2V183.0h-1.2zM662.0 179.8h1.2V185.4h-1.2zM663.2 178.6h1.2V185.4h-1.2zM664.4 178.5h1.2V184.1h-1.2zM665.6 179.7h1.2V184.1h-1.2zM666.8 179.6h1.2V185.2h-1.2zM668.0 180.8h1.2V185.2h-1.2zM669.2 178.4h1.2V184.0h-1.2zM670.4 178.4h1.2V185.2h-1.2zM671.6 179.5h1.2V185.1h-1.2zM672.8 178.3h1.2V182.7h-1.2zM674.0 178.3h1.2V181.5h-1.2zM675.2 178.3h1.2V182.7h-1.2zM676.4 179.5h1.2V182.7h-1.2zM677.6 179.5h1.2V182.7h-1.2zM678.8 178.3h1.2V182.7h-1.2zM680.0 178.4h1.2V182.8h-1.2zM681.2 179.6h1.2V182.8h-1.2zM682.4 179.6h1.2V184.0h-1.2zM683.6 178.5h1.2V184.1h-1.2zM684.8 178.5h1.2V184.1h-1.2zM686.0 181.0h1.2V184.2h-1.2zM687.2 178.6h1.2V184.2h-1.2zM688.4 178.7h1.2V185.5h-1.2zM689.6 181.2h1.2V185.6h-1.2zM690.8 181.2h1.2V185.6h-1.2zM692.0 180.1h1.2V185.7h-1.2zM693.2 180.1h1.2V183.3h-1.2zM694.4 180.2h1.2V183.4h-1.2zM695.6 180.2h1.2V185.8h-1.2zM696.8 180.3h1.2V185.9h-1.2zM698.0 180.3h1.2V183.5h-1.2zM699.2 180.4h1.2V183.6h-1.2zM700.4 179.2h1.2V183.6h-1.2zM701.6 179.2h1.2V182.4h-1.2zM702.8 179.2h1.2V182.4h-1.2zM704.0 179.3h1.2V184.9h-1.2zM705.2 180.5h1.2V184.9h-1.2zM706.4 180.5h1.2V186.1h-1.2zM707.6 179.3h1.2V186.1h-1.2zM708.8 179.3h1.2V182.5h-1.2zM710.0 179.3h1.2V183.7h-1.2zM711.2 179.3h1.2V183.7h-1.2zM712.4 179.3h1.2V183.7h-1.2zM713.6 180.5h1.2V186.1h-1.2zM714.8 182.9h1.2V186.1h-1.2zM716.0 181.7h1.2V186.1h-1.2zM717.2 181.7h1.2V184.9h-1.2zM718.4 181.7h1.2V186.1h-1.2zM719.6 182.9h1.2V186.1h-1.2zM720.8 180.5h1.2V186.1h-1.2zM722.0 180.6h1.2V185.0h-1.2zM723.2 179.4h1.2V185.0h-1.2zM724.4 179.4h1.2V185.0h-1.2zM725.6 180.6h1.2V185.0h-1.2zM726.8 180.7h1.2V185.1h-1.2zM728.0 181.9h1.2V185.1h-1.2zM729.2 180.7h1.2V185.1h-1.2zM730.4 179.6h1.2V184.0h-1.2zM731.6 179.6h1.2V186.4h-1.2zM732.8 179.7h1.2V186.5h-1.2zM734.0 179.7h1.2V184.1h-1.2zM735.2 181.0h1.2V184.2h-1.2zM736.4 181.0h1.2V184.2h-1.2zM737.6 181.0h1.2V185.4h-1.2zM738.8 182.3h1.2V186.7h-1.2zM740.0 179.9h1.2V186.7h-1.2zM741.2 179.9h1.2V185.5h-1.2zM742.4 181.1h1.2V185.5h-1.2zM743.6 181.1h1.2V184.3h-1.2zM744.8 181.1h1.2V184.3h-1.2zM746.0 179.9h1.2V184.3h-1.2zM747.2 179.9h1.2V183.1h-1.2zM748.4 179.9h1.2V183.1h-1.2zM749.6 179.8h1.2V186.6h-1.2zM750.8 181.0h1.2V186.6h-1.2zM752.0 179.8h1.2V184.2h-1.2zM753.2 179.7h1.2V186.5h-1.2zM754.4 183.3h1.2V186.5h-1.2zM755.6 180.8h1.2V186.4h-1.2zM756.8 179.6h1.2V184.0h-1.2zM758.0 179.5h1.2V182.7h-1.2zM759.2 179.5h1.2V182.7h-1.2zM760.4 179.4h1.2V183.8h-1.2zM761.6 179.4h1.2V183.8h-1.2zM762.8 179.3h1.2V182.5h-1.2zM764.0 179.3h1.2V182.5h-1.2zM765.2 179.3h1.2V183.7h-1.2zM766.4 180.4h1.2V186.0h-1.2zM767.6 181.6h1.2V186.0h-1.2zM768.8 180.4h1.2V184.8h-1.2zM770.0 180.4h1.2V183.6h-1.2zM771.2 180.4h1.2V183.6h-1.2zM772.4 180.4h1.2V183.6h-1.2zM773.6 180.4h1.2V183.6h-1.2zM774.8 179.2h1.2V183.6h-1.2zM776.0 179.2h1.2V182.4h-1.2zM777.2 179.2h1.2V186.0h-1.2zM778.4 179.2h1.2V186.0h-1.2zM779.6 179.2h1.2V183.6h-1.2zM780.8 180.4h1.2V184.8h-1.2zM782.0 181.7h1.2V186.1h-1.2zM783.2 179.3h1.2V186.1h-1.2zM784.4 179.3h1.2V182.5h-1.2zM785.6 179.3h1.2V182.5h-1.2zM786.8 179.3h1.2V183.7h-1.2zM788.0 180.5h1.2V183.7h-1.2zM789.2 180.5h1.2V186.1h-1.2zM790.4 181.8h1.2V186.2h-1.2zM791.6 181.7h1.2V186.1h-1.2zM792.8 179.3h1.2V186.1h-1.2zM794.0 179.3h1.2V182.5h-1.2zM795.2 179.3h1.2V184.9h-1.2zM796.4 181.7h1.2V186.1h-1.2zM797.6 180.5h1.2V186.1h-1.2zM798.8 180.5h1.2V183.7h-1.2zM800.0 179.2h1.2V183.6h-1.2zM801.2 179.2h1.2V183.6h-1.2zM802.4 180.4h1.2V186.0h-1.2zM803.6 181.6h1.2V186.0h-1.2zM804.8 181.5h1.2V184.7h-1.2zM806.0 181.5h1.2V185.9h-1.2zM807.2 179.1h1.2V185.9h-1.2zM808.4 179.1h1.2V182.3h-1.2zM809.6 179.1h1.2V182.3h-1.2zM810.8 179.1h1.2V183.5h-1.2zM812.0 180.3h1.2V184.7h-1.2zM813.2 181.5h1.2V185.9h-1.2zM814.4 181.5h1.2V185.9h-1.2zM815.6 181.5h1.2V184.7h-1.2zM816.8 181.6h1.2V184.8h-1.2zM818.0 180.4h1.2V184.8h-1.2zM819.2 180.4h1.2V183.6h-1.2zM820.4 179.3h1.2V183.7h-1.2zM821.6 179.3h1.2V184.9h-1.2zM822.8 179.4h1.2V185.0h-1.2zM824.0 179.4h1.2V186.2h-1.2zM825.2 181.9h1.2V186.3h-1.2zM826.4 180.7h1.2V185.1h-1.2zM827.6 179.6h1.2V184.0h-1.2zM828.8 179.6h1.2V182.8h-1.2zM830.0 179.7h1.2V185.3h-1.2zM831.2 182.1h1.2V185.3h-1.2zM832.4 179.7h1.2V185.3h-1.2zM833.6 179.8h1.2V183.0h-1.2zM834.8 179.8h1.2V184.2h-1.2zM836.0 181.0h1.2V184.2h-1.2zM837.2 181.0h1.2V184.2h-1.2zM838.4 179.8h1.2V184.2h-1.2zM839.6 179.8h1.2V184.2h-1.2zM840.8 179.8h1.2V184.2h-1.2zM842.0 179.8h1.2V184.2h-1.2zM843.2 181.0h1.2V184.2h-1.2zM844.4 181.0h1.2V186.6h-1.2zM845.6 182.1h1.2V186.5h-1.2zM846.8 182.1h1.2V186.5h-1.2zM848.0 180.9h1.2V186.5h-1.2zM849.2 179.6h1.2V184.0h-1.2zM850.4 179.6h1.2V182.8h-1.2zM851.6 179.5h1.2V186.3h-1.2zM852.8 181.9h1.2V186.3h-1.2zM854.0 180.7h1.2V185.1h-1.2zM855.2 179.4h1.2V183.8h-1.2zM856.4 179.4h1.2V183.8h-1.2zM857.6 180.6h1.2V185.0h-1.2zM858.8 180.6h1.2V185.0h-1.2zM860.0 179.3h1.2V183.7h-1.2zM861.2 179.3h1.2V184.9h-1.2zM862.4 181.7h1.2V186.1h-1.2zM863.6 179.3h1.2V186.1h-1.2zM864.8 179.3h1.2V182.5h-1.2zM866.0 179.3h1.2V183.7h-1.2zM867.2 180.5h1.2V183.7h-1.2zM868.4 180.5h1.2V184.9h-1.2zM869.6 179.3h1.2V184.9h-1.2zM870.8 179.3h1.2V184.9h-1.2zM872.0 181.7h1.2V184.9h-1.2zM873.2 180.5h1.2V184.9h-1.2zM874.4 179.3h1.2V183.7h-1.2zM875.6 179.3h1.2V186.1h-1.2zM876.8 180.5h1.2V186.1h-1.2zM878.0 180.5h1.2V184.9h-1.2zM879.2 179.2h1.2V184.8h-1.2zM880.4 179.2h1.2V182.4h-1.2zM881.6 179.2h1.2V184.8h-1.2zM882.8 180.4h1.2V184.8h-1.2zM884.0 180.3h1.2V185.9h-1.2zM885.2 180.3h1.2V185.9h-1.2zM886.4 179.1h1.2V183.5h-1.2zM887.6 179.0h1.2V182.2h-1.2zM888.8 179.0h1.2V183.4h-1.2zM890.0 180.1h1.2V184.5h-1.2zM891.2 181.2h1.2V185.6h-1.2zM892.4 178.8h1.2V185.6h-1.2zM893.6 178.7h1.2V183.1h-1.2zM894.8 178.7h1.2V183.1h-1.2zM896.0 178.6h1.2V185.4h-1.2zM897.2 178.5h1.2V185.3h-1.2zM898.4 178.5h1.2V181.7h-1.2zM899.6 178.5h1.2V181.7h-1.2zM900.8 178.4h1.2V182.8h-1.2zM902.0 179.6h1.2V185.2h-1.2zM903.2 181.9h1.2V185.1h-1.2zM904.4 180.7h1.2V185.1h-1.2zM905.6 180.7h1.2V185.1h-1.2zM906.8 181.9h1.2V185.1h-1.2zM908.0 179.5h1.2V185.1h-1.2zM909.2 178.3h1.2V182.7h-1.2zM910.4 178.3h1.2V185.1h-1.2zM911.6 180.7h1.2V185.1h-1.2zM912.8 178.3h1.2V183.9h-1.2zM914.0 178.4h1.2V184.0h-1.2zM915.2 179.6h1.2V184.0h-1.2zM916.4 179.6h1.2V182.8h-1.2zM917.6 179.7h1.2V182.9h-1.2zM918.8 178.5h1.2V182.9h-1.2zM920.0 178.6h1.2V181.8h-1.2zM921.2 178.6h1.2V181.8h-1.2zM922.4 178.6h1.2V183.0h-1.2zM923.6 179.9h1.2V185.5h-1.2zM924.8 178.7h1.2V185.5h-1.2zM926.0 178.7h1.2V185.5h-1.2zM927.2 178.8h1.2V185.6h-1.2zM928.4 178.8h1.2V183.2h-1.2zM929.6 180.0h1.2V184.4h-1.2zM930.8 181.2h1.2V184.4h-1.2zM932.0 180.0h1.2V184.4h-1.2z" fill="#f0f000"/>
</svg>
<!-- top bar -->
<div class="a" style="left:27.35px;top:2.10px;font-family:'Liberation Serif',serif;font-size:19px;line-height:22px;font-weight:normal;color:#00185a;-webkit-text-stroke:0.35px #00185a;transform-origin:0 0;transform:scaleX(0.72);white-space:nowrap"><span style="display:inline-block;width:16.806px;text-align:center"><span style="display:inline-block;margin:0 -6px">A</span></span><span style="display:inline-block;width:16.806px;text-align:center"><span style="display:inline-block;margin:0 -6px">K</span></span><span style="display:inline-block;width:16.806px;text-align:center"><span style="display:inline-block;margin:0 -6px">T</span></span><span style="display:inline-block;width:16.806px;text-align:center"><span style="display:inline-block;margin:0 -6px">A</span></span><span style="display:inline-block;width:16.806px;text-align:center"><span style="display:inline-block;margin:0 -6px">K</span></span><span style="display:inline-block;width:16.806px;text-align:center"><span style="display:inline-block;margin:0 -6px">O</span></span><span style="display:inline-block;width:16.806px;text-align:center"><span style="display:inline-block;margin:0 -6px">M</span></span></div>
<div class="pill" style="left:144px;top:1px;width:96px;height:22px;background:#f00000;"></div>
<div class="a" style="left:167.33px;top:0.60px;font-family:'Liberation Serif',serif;font-size:19px;line-height:22px;font-weight:normal;color:#4a0000;-webkit-text-stroke:0.6px #4a0000;transform-origin:0 0;transform:scaleX(1.0);white-space:nowrap"><span style="display:inline-block;width:12.150px;text-align:center"><span style="display:inline-block;margin:0 -6px">S</span></span><span style="display:inline-block;width:12.150px;text-align:center"><span style="display:inline-block;margin:0 -6px">t</span></span><span style="display:inline-block;width:12.150px;text-align:center"><span style="display:inline-block;margin:0 -6px">o</span></span><span style="display:inline-block;width:12.150px;text-align:center"><span style="display:inline-block;margin:0 -6px">p</span></span></div>
<div class="pill" style="left:300px;top:1px;width:360px;height:22px;"></div>
<svg class="a" style="left:300px;top:0" width="360" height="24" viewBox="300 0 360 24">
<rect x="312" y="10" width="337" height="2" fill="#c8c838"/>
<rect x="310" y="2" width="6" height="2" fill="#e020e0"/>
<rect x="312" y="4" width="1.5" height="4" fill="#c060c0"/>
<path d="M356 3H353V22" fill="none" stroke="#d8d8d8" stroke-width="2"/>
<path d="M603.5 3H606V22" fill="none" stroke="#d8d8d8" stroke-width="2"/>
</svg>
<div class="pill" style="left:672px;top:1px;width:129px;height:22px;"></div>
<svg class="a" style="left:674px;top:0" width="22" height="24" viewBox="674 0 22 24">
<path d="M677.3 6.5Q677.3 4.5 679.3 4.5H689Q691 4.5 691 6.5V17L684.2 20L677.3 17Z" fill="#10001c" stroke="#7c2cc4" stroke-width="1.8"/>
<rect x="679" y="8" width="10" height="1.8" fill="#a840d8"/>
<rect x="683.5" y="9" width="1.8" height="8" fill="#9438cc"/>
</svg>
<div class="a" style="left:693.40px;top:2.20px;font-family:'Liberation Serif',serif;font-size:19px;line-height:22px;font-weight:normal;color:#e4e4e4;-webkit-text-stroke:0.2px #e4e4e4;transform-origin:0 0;transform:scaleX(0.95);white-space:nowrap"><span style="display:inline-block;width:12.632px;text-align:center"><span style="display:inline-block;margin:0 -6px">2</span></span><span style="display:inline-block;width:12.632px;text-align:center"><span style="display:inline-block;margin:0 -6px">4</span></span><span style="display:inline-block;width:12.632px;text-align:center"><span style="display:inline-block;margin:0 -6px">0</span></span><span style="display:inline-block;width:12.632px;text-align:center"><span style="display:inline-block;margin:0 -6px">.</span></span><span style="display:inline-block;width:12.632px;text-align:center"><span style="display:inline-block;margin:0 -6px">0</span></span><span style="display:inline-block;width:12.632px;text-align:center"><span style="display:inline-block;margin:0 -6px;transform:scaleX(0.78)">m</span></span><span style="display:inline-block;width:12.632px;text-align:center"><span style="display:inline-block;margin:0 -6px">s</span></span></div>
<div class="pill" style="left:820px;top:1px;width:72px;height:22px;"></div>
<div class="a" style="left:830.60px;top:2.20px;font-family:'Liberation Serif',serif;font-size:19px;line-height:22px;font-weight:normal;color:#e4e4e4;-webkit-text-stroke:0.2px #e4e4e4;transform-origin:0 0;transform:scaleX(0.95);white-space:nowrap"><span style="display:inline-block;width:12.632px;text-align:center"><span style="display:inline-block;margin:0 -6px">6</span></span><span style="display:inline-block;width:12.632px;text-align:center"><span style="display:inline-block;margin:0 -6px">:</span></span><span style="display:inline-block;width:12.632px;text-align:center"><span style="display:inline-block;margin:0 -6px">3</span></span><span style="display:inline-block;width:12.632px;text-align:center"><span style="display:inline-block;margin:0 -6px">3</span></span></div>
<svg class="a" style="left:904px;top:0" width="22" height="22" viewBox="904 0 22 22">
<path d="M907.5 7Q908 3.8 912 4.2L917.5 5.5Q917.5 9 914.5 11L911.5 12.5Q907.2 11 907.5 7Z" fill="#30a818"/>
<path d="M908.2 8Q909 6 911 6.5L910 11Z" fill="#78e068"/>
<path d="M910.5 11.5L912 16" stroke="#b0d0e0" stroke-width="1.8"/>
<path d="M910 15.5L918.5 10.8L921.5 14.8L913 19.5Z" fill="#d8b8c8" stroke="#1848a8" stroke-width="1"/>
<path d="M913.5 15.8L918 13.5L919 15L914.5 17.3Z" fill="#584060"/>
</svg>
<!-- grid markers -->
<svg class="a" style="left:0;top:0" width="960" height="720" viewBox="0 0 960 720">
<defs><clipPath id="gc"><rect x="24" y="23" width="12" height="20"/></clipPath></defs>
<g clip-path="url(#gc)">
<path d="M18.5 25.5Q18.5 24.5 19.5 24.5H32.5V37.5L26 40.5L18.5 37.5Z" fill="#100018" stroke="#8a30d0" stroke-width="1.8"/>
<rect x="21" y="28" width="9.5" height="1.8" fill="#c040e0"/>
<rect x="24.8" y="29" width="1.8" height="8" fill="#a040d8"/>
</g>
<path d="M0.8 314H17L23.5 323.5L17 333.5H0.8Z" fill="#000" stroke="#b8e040" stroke-width="1.6"/>
<path d="M936 323.5L952 317V330Z" fill="#b020e0"/>
<path d="M-3.4 -3C-3.4 -5.3 -1.7 -6.1 0.2 -6.1C2.2 -6.1 3.6 -5 3.6 -3.1C3.6 -1.2 2.2 0.6 -3.5 5.9H4.1" transform="translate(9.6 324) scale(1.35 1)" fill="none" stroke="#e0e020" stroke-width="1.5" vector-effect="non-scaling-stroke"/>
</svg>

<!-- bottom panels -->
<div class="a" style="left:0;top:623px;width:383px;height:97px;background:#62b0cc;"></div>
<div class="a" style="left:2px;top:623px;width:248px;height:23px;background:#000;border-radius:4px;"></div>
<div class="a" style="left:2px;top:647px;width:248px;height:23.5px;background:#000;border-radius:4px;"></div>
<div class="a" style="left:252px;top:623px;width:128px;height:47.5px;background:#000;border-radius:5px;"></div>
<div class="a" style="left:2px;top:673px;width:378px;height:44px;background:#000;border-radius:5px;"></div>
<div class="a" style="left:383px;top:646px;width:575px;height:72px;background:#0262a0;"></div>
<!-- bottom left texts -->
<div class="pill" style="left:798px;top:623px;width:155px;height:22px;"></div>
<svg class="a" style="left:0;top:600px" width="960" height="120" viewBox="0 600 960 120">
<defs>
<path id="d2" d="M-3.2 -3C-3.2 -5.3 -1.6 -6.4 0.3 -6.4C2.3 -6.4 3.6 -5.1 3.6 -3.2C3.6 -1.1 2 0.7 -3.4 5.6H3.9" fill="none" stroke="#080808" stroke-width="2"/>
<path id="d1" d="M0.6 -6.2V6.2M-2.6 -3.4L0.6 -6" fill="none" stroke="#300000" stroke-width="2.2"/>
</defs>
<circle cx="12.5" cy="636.2" r="9.8" fill="#ea0c0c"/><use href="#d1" x="12.3" y="636.4"/>
<circle cx="12.3" cy="659.8" r="9.5" fill="#e8e020"/><use href="#d2" x="12.3" y="660"/>
<circle cx="12" cy="684.5" r="9.5" fill="#e8e020"/><use href="#d2" x="12.3" y="684.7"/>
<circle cx="12" cy="706" r="9.5" fill="#e8e020"/><use href="#d2" x="12.3" y="706.2"/>
<circle cx="202" cy="684.5" r="9.5" fill="#e8e020"/><use href="#d2" x="202.3" y="684.7"/>
<circle cx="202" cy="706" r="9.5" fill="#e8e020"/><use href="#d2" x="202.3" y="706.2"/>
<circle cx="810.5" cy="633.7" r="9.8" fill="#e8e020"/><use href="#d2" x="810.3" y="633.9"/>
<path d="M822 642.8H832.3L838 626.8H846" fill="none" stroke="#d8d8d8" stroke-width="1.5"/>
</svg>
<div class="a" style="left:20.65px;top:626.95px;font-family:'Liberation Serif',serif;font-size:18.5px;line-height:22px;font-weight:normal;color:#d82028;-webkit-text-stroke:0.25px #d82028;transform-origin:0 0;transform:scaleX(1.0);white-space:nowrap"><span style="display:inline-block;width:12.000px;text-align:center"><span style="display:inline-block;margin:0 -6px">5</span></span><span style="display:inline-block;width:12.000px;text-align:center"><span style="display:inline-block;margin:0 -6px">0</span></span><span style="display:inline-block;width:12.000px;text-align:center"><span style="display:inline-block;margin:0 -6px">.</span></span><span style="display:inline-block;width:12.000px;text-align:center"><span style="display:inline-block;margin:0 -6px">0</span></span><span style="display:inline-block;width:12.000px;text-align:center"><span style="display:inline-block;margin:0 -6px;transform:scaleX(0.78)">m</span></span><span style="display:inline-block;width:12.000px;text-align:center"><span style="display:inline-block;margin:0 -6px">V</span></span><span style="display:inline-block;width:12.000px;text-align:center"><span style="display:inline-block;margin:0 -6px">-</span></span></div><div class="a" style="left:125.60px;top:626.95px;font-family:'Liberation Serif',serif;font-size:18.5px;line-height:22px;font-weight:normal;color:#d82028;-webkit-text-stroke:0.25px #d82028;transform-origin:0 0;transform:scaleX(1.0);white-space:nowrap"><span style="display:inline-block;width:12.000px;text-align:center"><span style="display:inline-block;margin:0 -6px">2</span></span><span style="display:inline-block;width:12.000px;text-align:center"><span style="display:inline-block;margin:0 -6px">.</span></span><span style="display:inline-block;width:12.000px;text-align:center"><span style="display:inline-block;margin:0 -6px">0</span></span><span style="display:inline-block;width:12.000px;text-align:center"><span style="display:inline-block;margin:0 -6px">0</span></span><span style="display:inline-block;width:12.000px;text-align:center"><span style="display:inline-block;margin:0 -6px">d</span></span><span style="display:inline-block;width:12.000px;text-align:center"><span style="display:inline-block;margin:0 -6px">i</span></span><span style="display:inline-block;width:12.000px;text-align:center"><span style="display:inline-block;margin:0 -6px">v</span></span></div>
<div class="a" style="left:20.65px;top:650.85px;font-family:'Liberation Serif',serif;font-size:18.5px;line-height:22px;font-weight:normal;color:#d8d828;-webkit-text-stroke:0.25px #d8d828;transform-origin:0 0;transform:scaleX(1.0);white-space:nowrap"><span style="display:inline-block;width:12.000px;text-align:center"><span style="display:inline-block;margin:0 -6px">2</span></span><span style="display:inline-block;width:12.000px;text-align:center"><span style="display:inline-block;margin:0 -6px">V</span></span><span style="display:inline-block;width:12.000px;text-align:center"><span style="display:inline-block;margin:0 -6px">-</span></span></div><div class="a" style="left:125.60px;top:650.85px;font-family:'Liberation Serif',serif;font-size:18.5px;line-height:22px;font-weight:normal;color:#d8d828;-webkit-text-stroke:0.25px #d8d828;transform-origin:0 0;transform:scaleX(1.0);white-space:nowrap"><span style="display:inline-block;width:12.000px;text-align:center"><span style="display:inline-block;margin:0 -6px">0</span></span><span style="display:inline-block;width:12.000px;text-align:center"><span style="display:inline-block;margin:0 -6px">.</span></span><span style="display:inline-block;width:12.000px;text-align:center"><span style="display:inline-block;margin:0 -6px">0</span></span><span style="display:inline-block;width:12.000px;text-align:center"><span style="display:inline-block;margin:0 -6px">0</span></span><span style="display:inline-block;width:12.000px;text-align:center"><span style="display:inline-block;margin:0 -6px">d</span></span><span style="display:inline-block;width:12.000px;text-align:center"><span style="display:inline-block;margin:0 -6px">i</span></span><span style="display:inline-block;width:12.000px;text-align:center"><span style="display:inline-block;margin:0 -6px">v</span></span></div>
<div class="a" style="left:261.60px;top:624.45px;font-family:'Liberation Serif',serif;font-size:18.5px;line-height:22px;font-weight:normal;color:#e0e0e0;-webkit-text-stroke:0.1px #e0e0e0;transform-origin:0 0;transform:scaleX(1.0);white-space:nowrap"><span style="display:inline-block;width:12.000px;text-align:center"><span style="display:inline-block;margin:0 -6px">(</span></span><span style="display:inline-block;width:12.000px;text-align:center"><span style="display:inline-block;margin:0 -6px">2</span></span><span style="display:inline-block;width:12.000px;text-align:center"><span style="display:inline-block;margin:0 -6px">5</span></span><span style="display:inline-block;width:12.000px;text-align:center"><span style="display:inline-block;margin:0 -6px">0</span></span><span style="display:inline-block;width:12.000px;text-align:center"><span style="display:inline-block;margin:0 -6px">K</span></span><span style="display:inline-block;width:12.000px;text-align:center"><span style="display:inline-block;margin:0 -6px">S</span></span><span style="display:inline-block;width:12.000px;text-align:center"><span style="display:inline-block;margin:0 -6px">/</span></span><span style="display:inline-block;width:12.000px;text-align:center"><span style="display:inline-block;margin:0 -6px">s</span></span><span style="display:inline-block;width:12.000px;text-align:center"><span style="display:inline-block;margin:0 -6px">)</span></span></div>
<div class="a" style="left:261.55px;top:647.65px;font-family:'Liberation Serif',serif;font-size:18.5px;line-height:22px;font-weight:normal;color:#e0e0e0;-webkit-text-stroke:0.1px #e0e0e0;transform-origin:0 0;transform:scaleX(1.0);white-space:nowrap"><span style="display:inline-block;width:12.000px;text-align:center"><span style="display:inline-block;margin:0 -6px">D</span></span><span style="display:inline-block;width:12.000px;text-align:center"><span style="display:inline-block;margin:0 -6px">e</span></span><span style="display:inline-block;width:12.000px;text-align:center"><span style="display:inline-block;margin:0 -6px">p</span></span><span style="display:inline-block;width:12.000px;text-align:center"><span style="display:inline-block;margin:0 -6px">t</span></span><span style="display:inline-block;width:12.000px;text-align:center"><span style="display:inline-block;margin:0 -6px">h</span></span><span style="display:inline-block;width:12.000px;text-align:center"><span style="display:inline-block;margin:0 -6px">:</span></span><span style="display:inline-block;width:12.000px;text-align:center"><span style="display:inline-block;margin:0 -6px">1</span></span><span style="display:inline-block;width:12.000px;text-align:center"><span style="display:inline-block;margin:0 -6px">0</span></span><span style="display:inline-block;width:12.000px;text-align:center"><span style="display:inline-block;margin:0 -6px">K</span></span></div>
<div class="a" style="left:24.45px;top:673.75px;font-family:'Liberation Serif',serif;font-size:18.5px;line-height:22px;font-weight:normal;color:#d8d828;-webkit-text-stroke:0.25px #d8d828;transform-origin:0 0;transform:scaleX(1.0);white-space:nowrap"><span style="display:inline-block;width:12.000px;text-align:center"><span style="display:inline-block;margin:0 -6px">F</span></span><span style="display:inline-block;width:12.000px;text-align:center"><span style="display:inline-block;margin:0 -6px">:</span></span><span style="display:inline-block;width:12.000px;text-align:center">&nbsp;</span><span style="display:inline-block;width:12.000px;text-align:center">&nbsp;</span><span style="display:inline-block;width:12.000px;text-align:center"><span style="display:inline-block;margin:0 -6px">?</span></span></div>
<div class="a" style="left:24.35px;top:696.85px;font-family:'Liberation Serif',serif;font-size:18.5px;line-height:22px;font-weight:normal;color:#d8d828;-webkit-text-stroke:0.25px #d8d828;transform-origin:0 0;transform:scaleX(1.0);white-space:nowrap"><span style="display:inline-block;width:12.100px;text-align:center"><span style="display:inline-block;margin:0 -6px">+</span></span><span style="display:inline-block;width:12.100px;text-align:center"><span style="display:inline-block;margin:0 -6px">D</span></span><span style="display:inline-block;width:12.100px;text-align:center"><span style="display:inline-block;margin:0 -6px">:</span></span><span style="display:inline-block;width:12.100px;text-align:center">&nbsp;</span><span style="display:inline-block;width:12.100px;text-align:center">&nbsp;</span><span style="display:inline-block;width:12.100px;text-align:center"><span style="display:inline-block;margin:0 -6px">?</span></span></div>
<div class="a" style="left:216.35px;top:673.45px;font-family:'Liberation Serif',serif;font-size:18.5px;line-height:22px;font-weight:normal;color:#d8d828;-webkit-text-stroke:0.25px #d8d828;transform-origin:0 0;transform:scaleX(1.0);white-space:nowrap"><span style="display:inline-block;width:12.000px;text-align:center"><span style="display:inline-block;margin:0 -6px">V</span></span><span style="display:inline-block;width:12.000px;text-align:center"><span style="display:inline-block;margin:0 -6px">k</span></span><span style="display:inline-block;width:12.000px;text-align:center"><span style="display:inline-block;margin:0 -6px">:</span></span><span style="display:inline-block;width:12.000px;text-align:center"><span style="display:inline-block;margin:0 -6px">4</span></span><span style="display:inline-block;width:12.000px;text-align:center"><span style="display:inline-block;margin:0 -6px">.</span></span><span style="display:inline-block;width:12.000px;text-align:center"><span style="display:inline-block;margin:0 -6px">7</span></span><span style="display:inline-block;width:12.000px;text-align:center"><span style="display:inline-block;margin:0 -6px">0</span></span><span style="display:inline-block;width:12.000px;text-align:center"><span style="display:inline-block;margin:0 -6px">2</span></span><span style="display:inline-block;width:12.000px;text-align:center"><span style="display:inline-block;margin:0 -6px">v</span></span></div>
<div class="a" style="left:216.20px;top:695.95px;font-family:'Liberation Serif',serif;font-size:18.5px;line-height:22px;font-weight:normal;color:#d8d828;-webkit-text-stroke:0.25px #d8d828;transform-origin:0 0;transform:scaleX(1.0);white-space:nowrap"><span style="display:inline-block;width:12.000px;text-align:center"><span style="display:inline-block;margin:0 -6px">V</span></span><span style="display:inline-block;width:12.000px;text-align:center"><span style="display:inline-block;margin:0 -6px">:</span></span><span style="display:inline-block;width:12.000px;text-align:center"><span style="display:inline-block;margin:0 -6px">4</span></span><span style="display:inline-block;width:12.000px;text-align:center"><span style="display:inline-block;margin:0 -6px">.</span></span><span style="display:inline-block;width:12.000px;text-align:center"><span style="display:inline-block;margin:0 -6px">7</span></span><span style="display:inline-block;width:12.000px;text-align:center"><span style="display:inline-block;margin:0 -6px">0</span></span><span style="display:inline-block;width:12.000px;text-align:center"><span style="display:inline-block;margin:0 -6px">1</span></span><span style="display:inline-block;width:12.000px;text-align:center"><span style="display:inline-block;margin:0 -6px">v</span></span></div>
<!-- bottom right -->
<div class="pill" style="left:384px;top:624px;width:117px;height:21px;"></div>
<div class="a" style="left:399.10px;top:624.65px;font-family:'Liberation Serif',serif;font-size:18.5px;line-height:22px;font-weight:normal;color:#e0e0e0;-webkit-text-stroke:0.1px #e0e0e0;transform-origin:0 0;transform:scaleX(1.0);white-space:nowrap"><span style="display:inline-block;width:12.000px;text-align:center"><span style="display:inline-block;margin:0 -6px;transform:scaleX(0.78)">M</span></span><span style="display:inline-block;width:12.000px;text-align:center"><span style="display:inline-block;margin:0 -6px">:</span></span><span style="display:inline-block;width:12.000px;text-align:center"><span style="display:inline-block;margin:0 -6px">2</span></span><span style="display:inline-block;width:12.000px;text-align:center"><span style="display:inline-block;margin:0 -6px">.</span></span><span style="display:inline-block;width:12.000px;text-align:center"><span style="display:inline-block;margin:0 -6px">0</span></span><span style="display:inline-block;width:12.000px;text-align:center"><span style="display:inline-block;margin:0 -6px;transform:scaleX(0.78)">m</span></span><span style="display:inline-block;width:12.000px;text-align:center"><span style="display:inline-block;margin:0 -6px">s</span></span></div>

<div class="a" style="left:847.25px;top:625.65px;font-family:'Liberation Serif',serif;font-size:18.5px;line-height:22px;font-weight:normal;color:#e0e0e0;-webkit-text-stroke:0.1px #e0e0e0;transform-origin:0 0;transform:scaleX(1.0);white-space:nowrap"><span style="display:inline-block;width:12.000px;text-align:center"><span style="display:inline-block;margin:0 -6px">0</span></span><span style="display:inline-block;width:12.000px;text-align:center"><span style="display:inline-block;margin:0 -6px">.</span></span><span style="display:inline-block;width:12.000px;text-align:center"><span style="display:inline-block;margin:0 -6px">0</span></span><span style="display:inline-block;width:12.000px;text-align:center"><span style="display:inline-block;margin:0 -6px">0</span></span><span style="display:inline-block;width:12.000px;text-align:center"><span style="display:inline-block;margin:0 -6px;transform:scaleX(0.78)">m</span></span><span style="display:inline-block;width:12.000px;text-align:center"><span style="display:inline-block;margin:0 -6px">V</span></span></div>
<div class="btn" style="left:387px;top:649px;width:107px;height:67px;"></div>
<div class="a" style="left:414.45px;top:657.40px;font-family:'Liberation Serif',serif;font-size:19px;line-height:22px;font-weight:normal;color:#00205a;-webkit-text-stroke:0.75px #00205a;transform-origin:0 0;transform:scaleX(1.0);white-space:nowrap"><span style="display:inline-block;width:12.000px;text-align:center"><span style="display:inline-block;margin:0 -6px">T</span></span><span style="display:inline-block;width:12.000px;text-align:center"><span style="display:inline-block;margin:0 -6px">y</span></span><span style="display:inline-block;width:12.000px;text-align:center"><span style="display:inline-block;margin:0 -6px">p</span></span><span style="display:inline-block;width:12.000px;text-align:center"><span style="display:inline-block;margin:0 -6px">e</span></span></div>
<div class="a" style="left:409px;top:685px;width:60px;height:24px;background:#e6e6e6;"></div>
<div class="a" style="left:409.25px;top:685.90px;font-family:'Liberation Serif',serif;font-size:19px;line-height:22px;font-weight:normal;color:#101010;-webkit-text-stroke:0.25px #101010;transform-origin:0 0;transform:scaleX(1.0);white-space:nowrap"><span style="display:inline-block;width:12.000px;text-align:center"><span style="display:inline-block;margin:0 -6px">I</span></span><span style="display:inline-block;width:12.000px;text-align:center"><span style="display:inline-block;margin:0 -6px;transform:scaleX(0.78)">m</span></span><span style="display:inline-block;width:12.000px;text-align:center"><span style="display:inline-block;margin:0 -6px">a</span></span><span style="display:inline-block;width:12.000px;text-align:center"><span style="display:inline-block;margin:0 -6px">g</span></span><span style="display:inline-block;width:12.000px;text-align:center"><span style="display:inline-block;margin:0 -6px">e</span></span></div>
<div class="btn" style="left:717px;top:649px;width:106px;height:66px;"></div>
<div class="a" style="left:744.40px;top:671.40px;font-family:'Liberation Serif',serif;font-size:19px;line-height:22px;font-weight:normal;color:#00205a;-webkit-text-stroke:0.5px #00205a;transform-origin:0 0;transform:scaleX(1.0);white-space:nowrap"><span style="display:inline-block;width:12.000px;text-align:center"><span style="display:inline-block;margin:0 -6px">S</span></span><span style="display:inline-block;width:12.000px;text-align:center"><span style="display:inline-block;margin:0 -6px">a</span></span><span style="display:inline-block;width:12.000px;text-align:center"><span style="display:inline-block;margin:0 -6px">v</span></span><span style="display:inline-block;width:12.000px;text-align:center"><span style="display:inline-block;margin:0 -6px">e</span></span></div>

</div></body></html>
